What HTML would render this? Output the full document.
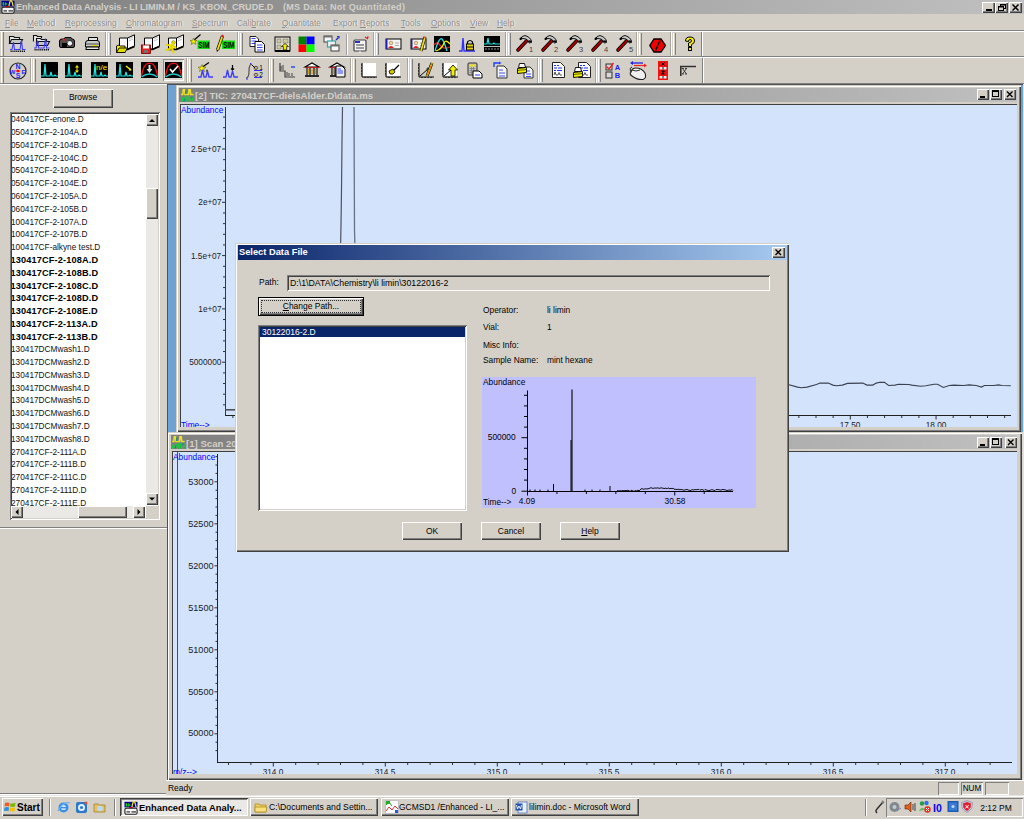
<!DOCTYPE html><html><head><meta charset="utf-8"><style>
html,body{margin:0;padding:0;}
body{width:1024px;height:819px;position:relative;overflow:hidden;background:#d4d0c8;font-family:'Liberation Sans', sans-serif;}
div{position:absolute;box-sizing:border-box;}
.t{white-space:nowrap;line-height:1;}
svg{position:absolute;overflow:visible;}
.dith{background:#ebe9e5;}

</style></head><body>
<div style="left:0px;top:0px;width:1024px;height:14px;background:linear-gradient(to right,#808080,#c0c0c0)"></div>
<svg style="left:1px;top:0px;" width="14" height="14" viewBox="0 0 14 14"><rect x="0.5" y="0.8" width="13" height="5.6" fill="#000090"/><path d="M2.3 5.5 L2.3 2.3" stroke="#10e020" stroke-width="1.3"/><path d="M4.3 5.5 L4.5 3.2 L6.3 4.5" stroke="#10c020" stroke-width="1.4" fill="none"/><path d="M8 6 Q9 -1 10.5 1 Q11.5 2 12 6" stroke="#f0e010" stroke-width="1.3" fill="none"/><path d="M4.6 6 L9 6 L6.8 9.3 Z" fill="#ff0000"/><rect x="0.9" y="7.2" width="12.2" height="6" rx="1.5" fill="#f4f4f4" stroke="#202020" stroke-width="1.1"/><rect x="2.5" y="10.3" width="3.5" height="1.2" fill="#303030"/><rect x="7.5" y="10.3" width="4.5" height="1.2" fill="#303030"/></svg>
<div class="t" style="left:16px;top:2.6px;font-size:9.1px;color:#d4d0c8;font-weight:bold;">Enhanced Data Analysis - LI LIMIN.M / KS_KBON_CRUDE.D</div>
<div class="t" style="left:283px;top:2.6px;font-size:9.1px;color:#d4d0c8;font-weight:bold;letter-spacing:0.25px">(MS Data: Not Quantitated)</div>
<div style="left:982px;top:2px;width:13px;height:11px;background:#d4d0c8;box-shadow:inset 1px 1px #fff, inset -1px -1px #404040, inset -2px -2px #808080;"></div>
<div style="left:995px;top:2px;width:13px;height:11px;background:#d4d0c8;box-shadow:inset 1px 1px #fff, inset -1px -1px #404040, inset -2px -2px #808080;"></div>
<div style="left:1009px;top:2px;width:13px;height:11px;background:#d4d0c8;box-shadow:inset 1px 1px #fff, inset -1px -1px #404040, inset -2px -2px #808080;"></div>
<div style="left:986px;top:9px;width:6px;height:2px;background:#000"></div>
<svg style="left:995px;top:2px;" width="13" height="11" viewBox="0 0 13 11"><rect x="5.5" y="2.5" width="5" height="4" fill="none" stroke="#000"/><rect x="5" y="2" width="6" height="1.5" fill="#000"/><rect x="3.5" y="4.5" width="5" height="4" fill="#d4d0c8" stroke="#000"/><rect x="3" y="4" width="6" height="1.5" fill="#000"/></svg>
<svg style="left:1009px;top:2px;" width="13" height="11" viewBox="0 0 13 11"><path d="M3.5 2.5 L9.5 8.5 M9.5 2.5 L3.5 8.5" stroke="#000" stroke-width="1.5"/></svg>
<div class="t" style="left:5.8px;top:19.42px;font-size:9.31px;color:#f4f4f4;font-weight:normal;transform:scaleX(0.91);transform-origin:left 0;"><u>F</u>ile</div>
<div class="t" style="left:5px;top:18.72px;font-size:9.31px;color:#8e8e8e;font-weight:normal;transform:scaleX(0.91);transform-origin:left 0;"><u>F</u>ile</div>
<div class="t" style="left:27.8px;top:19.42px;font-size:9.31px;color:#f4f4f4;font-weight:normal;transform:scaleX(0.91);transform-origin:left 0;"><u>M</u>ethod</div>
<div class="t" style="left:27px;top:18.72px;font-size:9.31px;color:#8e8e8e;font-weight:normal;transform:scaleX(0.91);transform-origin:left 0;"><u>M</u>ethod</div>
<div class="t" style="left:65.8px;top:19.42px;font-size:9.31px;color:#f4f4f4;font-weight:normal;transform:scaleX(0.91);transform-origin:left 0;"><u>R</u>eprocessing</div>
<div class="t" style="left:65px;top:18.72px;font-size:9.31px;color:#8e8e8e;font-weight:normal;transform:scaleX(0.91);transform-origin:left 0;"><u>R</u>eprocessing</div>
<div class="t" style="left:126.8px;top:19.42px;font-size:9.31px;color:#f4f4f4;font-weight:normal;transform:scaleX(0.91);transform-origin:left 0;"><u>C</u>hromatogram</div>
<div class="t" style="left:126px;top:18.72px;font-size:9.31px;color:#8e8e8e;font-weight:normal;transform:scaleX(0.91);transform-origin:left 0;"><u>C</u>hromatogram</div>
<div class="t" style="left:192.8px;top:19.42px;font-size:9.31px;color:#f4f4f4;font-weight:normal;transform:scaleX(0.91);transform-origin:left 0;"><u>S</u>pectrum</div>
<div class="t" style="left:192px;top:18.72px;font-size:9.31px;color:#8e8e8e;font-weight:normal;transform:scaleX(0.91);transform-origin:left 0;"><u>S</u>pectrum</div>
<div class="t" style="left:237.8px;top:19.42px;font-size:9.31px;color:#f4f4f4;font-weight:normal;transform:scaleX(0.91);transform-origin:left 0;">Cali<u>b</u>rate</div>
<div class="t" style="left:237px;top:18.72px;font-size:9.31px;color:#8e8e8e;font-weight:normal;transform:scaleX(0.91);transform-origin:left 0;">Cali<u>b</u>rate</div>
<div class="t" style="left:282.8px;top:19.42px;font-size:9.31px;color:#f4f4f4;font-weight:normal;transform:scaleX(0.91);transform-origin:left 0;"><u>Q</u>uantitate</div>
<div class="t" style="left:282px;top:18.72px;font-size:9.31px;color:#8e8e8e;font-weight:normal;transform:scaleX(0.91);transform-origin:left 0;"><u>Q</u>uantitate</div>
<div class="t" style="left:333.8px;top:19.42px;font-size:9.31px;color:#f4f4f4;font-weight:normal;transform:scaleX(0.91);transform-origin:left 0;">Export <u>R</u>eports</div>
<div class="t" style="left:333px;top:18.72px;font-size:9.31px;color:#8e8e8e;font-weight:normal;transform:scaleX(0.91);transform-origin:left 0;">Export <u>R</u>eports</div>
<div class="t" style="left:401.8px;top:19.42px;font-size:9.31px;color:#f4f4f4;font-weight:normal;transform:scaleX(0.91);transform-origin:left 0;"><u>T</u>ools</div>
<div class="t" style="left:401px;top:18.72px;font-size:9.31px;color:#8e8e8e;font-weight:normal;transform:scaleX(0.91);transform-origin:left 0;"><u>T</u>ools</div>
<div class="t" style="left:431.8px;top:19.42px;font-size:9.31px;color:#f4f4f4;font-weight:normal;transform:scaleX(0.91);transform-origin:left 0;"><u>O</u>ptions</div>
<div class="t" style="left:431px;top:18.72px;font-size:9.31px;color:#8e8e8e;font-weight:normal;transform:scaleX(0.91);transform-origin:left 0;"><u>O</u>ptions</div>
<div class="t" style="left:470.8px;top:19.42px;font-size:9.31px;color:#f4f4f4;font-weight:normal;transform:scaleX(0.91);transform-origin:left 0;"><u>V</u>iew</div>
<div class="t" style="left:470px;top:18.72px;font-size:9.31px;color:#8e8e8e;font-weight:normal;transform:scaleX(0.91);transform-origin:left 0;"><u>V</u>iew</div>
<div class="t" style="left:497.8px;top:19.42px;font-size:9.31px;color:#f4f4f4;font-weight:normal;transform:scaleX(0.91);transform-origin:left 0;"><u>H</u>elp</div>
<div class="t" style="left:497px;top:18.72px;font-size:9.31px;color:#8e8e8e;font-weight:normal;transform:scaleX(0.91);transform-origin:left 0;"><u>H</u>elp</div>
<div style="left:0px;top:30px;width:1024px;height:1px;background:#808080"></div>
<div style="left:0px;top:31px;width:1024px;height:1px;background:#fff"></div>
<div style="left:0px;top:56px;width:1024px;height:1px;background:#808080"></div>
<div style="left:0px;top:57px;width:1024px;height:1px;background:#fff"></div>
<div style="left:0px;top:83px;width:1024px;height:1px;background:#808080"></div>
<div style="left:0px;top:84px;width:1024px;height:1px;background:#fff"></div>
<div style="left:53px;top:89px;width:60px;height:19px;background:#d4d0c8;box-shadow:inset 1px 1px #fff, inset -1px -1px #404040, inset -2px -2px #808080;"></div>
<div class="t" style="left:-17px;width:200px;text-align:center;top:93.42px;font-size:9.31px;color:#000;font-weight:normal;transform:scaleX(0.91);transform-origin:center 0;">Browse</div>
<div style="left:10px;top:112px;width:150px;height:408px;background:#fff;box-shadow:inset 1px 1px #808080, inset -1px -1px #fff, inset 2px 2px #404040, inset -2px -2px #d4d0c8;"></div>
<div style="left:12px;top:114px;width:134px;height:392px;overflow:hidden;">
<div class="t" style="left:-1.5px;top:1.33px;font-size:9.3px;color:#111;transform:scaleX(0.89);transform-origin:0 0">040417CF-enone.D</div>
<div class="t" style="left:-1.5px;top:14.11px;font-size:9.3px;color:#111;transform:scaleX(0.89);transform-origin:0 0">050417CF-2-104A.D</div>
<div class="t" style="left:-1.5px;top:26.89px;font-size:9.3px;color:#111;transform:scaleX(0.89);transform-origin:0 0">050417CF-2-104B.D</div>
<div class="t" style="left:-1.5px;top:39.67px;font-size:9.3px;color:#111;transform:scaleX(0.89);transform-origin:0 0">050417CF-2-104C.D</div>
<div class="t" style="left:-1.5px;top:52.45px;font-size:9.3px;color:#111;transform:scaleX(0.89);transform-origin:0 0">050417CF-2-104D.D</div>
<div class="t" style="left:-1.5px;top:65.23px;font-size:9.3px;color:#111;transform:scaleX(0.89);transform-origin:0 0">050417CF-2-104E.D</div>
<div class="t" style="left:-1.5px;top:78.01px;font-size:9.3px;color:#111;transform:scaleX(0.89);transform-origin:0 0">060417CF-2-105A.D</div>
<div class="t" style="left:-1.5px;top:90.79px;font-size:9.3px;color:#111;transform:scaleX(0.89);transform-origin:0 0">060417CF-2-105B.D</div>
<div class="t" style="left:-1.5px;top:103.57px;font-size:9.3px;color:#111;transform:scaleX(0.89);transform-origin:0 0">100417CF-2-107A.D</div>
<div class="t" style="left:-1.5px;top:116.35px;font-size:9.3px;color:#111;transform:scaleX(0.89);transform-origin:0 0">100417CF-2-107B.D</div>
<div class="t" style="left:-1.5px;top:129.13px;font-size:9.3px;color:#111;transform:scaleX(0.89);transform-origin:0 0">100417CF-alkyne test.D</div>
<div class="t" style="left:-1.5px;top:141.99px;font-size:9.2px;font-weight:bold;letter-spacing:0.15px;color:#000">130417CF-2-108A.D</div>
<div class="t" style="left:-1.5px;top:154.77px;font-size:9.2px;font-weight:bold;letter-spacing:0.15px;color:#000">130417CF-2-108B.D</div>
<div class="t" style="left:-1.5px;top:167.55px;font-size:9.2px;font-weight:bold;letter-spacing:0.15px;color:#000">130417CF-2-108C.D</div>
<div class="t" style="left:-1.5px;top:180.33px;font-size:9.2px;font-weight:bold;letter-spacing:0.15px;color:#000">130417CF-2-108D.D</div>
<div class="t" style="left:-1.5px;top:193.11px;font-size:9.2px;font-weight:bold;letter-spacing:0.15px;color:#000">130417CF-2-108E.D</div>
<div class="t" style="left:-1.5px;top:205.89px;font-size:9.2px;font-weight:bold;letter-spacing:0.15px;color:#000">130417CF-2-113A.D</div>
<div class="t" style="left:-1.5px;top:218.67px;font-size:9.2px;font-weight:bold;letter-spacing:0.15px;color:#000">130417CF-2-113B.D</div>
<div class="t" style="left:-1.5px;top:231.37px;font-size:9.3px;color:#111;transform:scaleX(0.89);transform-origin:0 0">130417DCMwash1.D</div>
<div class="t" style="left:-1.5px;top:244.15px;font-size:9.3px;color:#111;transform:scaleX(0.89);transform-origin:0 0">130417DCMwash2.D</div>
<div class="t" style="left:-1.5px;top:256.93px;font-size:9.3px;color:#111;transform:scaleX(0.89);transform-origin:0 0">130417DCMwash3.D</div>
<div class="t" style="left:-1.5px;top:269.71px;font-size:9.3px;color:#111;transform:scaleX(0.89);transform-origin:0 0">130417DCMwash4.D</div>
<div class="t" style="left:-1.5px;top:282.49px;font-size:9.3px;color:#111;transform:scaleX(0.89);transform-origin:0 0">130417DCMwash5.D</div>
<div class="t" style="left:-1.5px;top:295.27px;font-size:9.3px;color:#111;transform:scaleX(0.89);transform-origin:0 0">130417DCMwash6.D</div>
<div class="t" style="left:-1.5px;top:308.05px;font-size:9.3px;color:#111;transform:scaleX(0.89);transform-origin:0 0">130417DCMwash7.D</div>
<div class="t" style="left:-1.5px;top:320.83px;font-size:9.3px;color:#111;transform:scaleX(0.89);transform-origin:0 0">130417DCMwash8.D</div>
<div class="t" style="left:-1.5px;top:333.61px;font-size:9.3px;color:#111;transform:scaleX(0.89);transform-origin:0 0">270417CF-2-111A.D</div>
<div class="t" style="left:-1.5px;top:346.39px;font-size:9.3px;color:#111;transform:scaleX(0.89);transform-origin:0 0">270417CF-2-111B.D</div>
<div class="t" style="left:-1.5px;top:359.17px;font-size:9.3px;color:#111;transform:scaleX(0.89);transform-origin:0 0">270417CF-2-111C.D</div>
<div class="t" style="left:-1.5px;top:371.95px;font-size:9.3px;color:#111;transform:scaleX(0.89);transform-origin:0 0">270417CF-2-111D.D</div>
<div class="t" style="left:-1.5px;top:384.73px;font-size:9.3px;color:#111;transform:scaleX(0.89);transform-origin:0 0">270417CF-2-111E.D</div>
</div>
<div style="left:146px;top:126px;width:12px;height:367px;"></div>
<div class="dith" style="left:146px;top:126px;width:12px;height:367px;"></div>
<div style="left:146px;top:114px;width:12px;height:12px;background:#d4d0c8;box-shadow:inset 1px 1px #fff, inset -1px -1px #404040, inset -2px -2px #808080;"></div>
<svg style="left:146px;top:114px;" width="12" height="12" viewBox="0 0 12 12"><path d="M3 8 L6 5 L9 8 Z" fill="#000"/></svg>
<div style="left:146px;top:188px;width:12px;height:31px;background:#d4d0c8;box-shadow:inset 1px 1px #fff, inset -1px -1px #404040, inset -2px -2px #808080;"></div>
<div style="left:146px;top:493px;width:12px;height:12px;background:#d4d0c8;box-shadow:inset 1px 1px #fff, inset -1px -1px #404040, inset -2px -2px #808080;"></div>
<svg style="left:146px;top:493px;" width="12" height="12" viewBox="0 0 12 12"><path d="M3 4.5 L6 7.5 L9 4.5 Z" fill="#000"/></svg>
<div class="dith" style="left:23px;top:506px;width:110px;height:12px;"></div>
<div style="left:11px;top:506px;width:12px;height:12px;background:#d4d0c8;box-shadow:inset 1px 1px #fff, inset -1px -1px #404040, inset -2px -2px #808080;"></div>
<svg style="left:11px;top:506px;" width="12" height="12" viewBox="0 0 12 12"><path d="M7.5 3 L4.5 6 L7.5 9 Z" fill="#000"/></svg>
<div style="left:78px;top:506px;width:49px;height:12px;background:#d4d0c8;box-shadow:inset 1px 1px #fff, inset -1px -1px #404040, inset -2px -2px #808080;"></div>
<div style="left:133px;top:506px;width:12px;height:12px;background:#d4d0c8;box-shadow:inset 1px 1px #fff, inset -1px -1px #404040, inset -2px -2px #808080;"></div>
<svg style="left:133px;top:506px;" width="12" height="12" viewBox="0 0 12 12"><path d="M4.5 3 L7.5 6 L4.5 9 Z" fill="#000"/></svg>
<div style="left:146px;top:506px;width:12px;height:12px;background:#d4d0c8"></div>
<div style="left:0px;top:527px;width:167px;height:1px;background:#808080"></div>
<div style="left:0px;top:528px;width:167px;height:1px;background:#fff"></div>
<div style="left:0px;top:793px;width:166px;height:1px;background:#808080"></div>
<div style="left:0px;top:794px;width:166px;height:1px;background:#fff"></div>
<div style="left:167px;top:84px;width:857px;height:696px;background:#6ea2d4;box-shadow:inset 1px 1px #505050"></div>
<div style="left:1023px;top:84px;width:1px;height:696px;background:#e4e2dc"></div>
<div style="left:176px;top:85px;width:845px;height:347px;background:#d4d0c8;box-shadow:inset 1px 1px #d4d0c8, inset 2px 2px #fff, inset -1px -1px #404040, inset -2px -2px #808080;"></div>
<div style="left:179px;top:88px;width:838px;height:14px;background:linear-gradient(to right,#808080,#c0c0c0)"></div>
<svg style="left:181px;top:89px;" width="13" height="13" viewBox="0 0 13 13"><path d="M0 5.5 L1.8 5.5 L2.3 0.8 L3.5 0.8 L4 5.5 L7.5 5.5 L8 0.8 L9.2 0.8 L9.7 5.5 L12.5 5.5" stroke="#e8e020" stroke-width="1.6" fill="none"/><path d="M4.8 1.5 L4.8 5" stroke="#108080" stroke-width="1.2"/><path d="M0.8 12.5 L1.2 8.5 L2.5 12 M3.5 12 L4.5 8 M6 12.5 L6 6.5 M8.3 12.5 L8.3 7.5 L9.2 11.5 M11.5 8 L12 12.5" stroke="#10d030" stroke-width="1.5" fill="none"/><path d="M3 12.5 L4 9.5 M10 9 L11.5 7.5" stroke="#108a90" stroke-width="1.2"/></svg>
<div class="t" style="left:195px;top:90.87px;font-size:9.6px;color:#d4d0c8;font-weight:bold;">[2] TIC: 270417CF-dielsAlder.D\data.ms</div>
<div style="left:977px;top:89px;width:12px;height:11px;background:#d4d0c8;box-shadow:inset 1px 1px #fff, inset -1px -1px #404040, inset -2px -2px #808080;"></div>
<div style="left:990px;top:89px;width:12px;height:11px;background:#d4d0c8;box-shadow:inset 1px 1px #fff, inset -1px -1px #404040, inset -2px -2px #808080;"></div>
<div style="left:1004px;top:89px;width:12px;height:11px;background:#d4d0c8;box-shadow:inset 1px 1px #fff, inset -1px -1px #404040, inset -2px -2px #808080;"></div>
<div style="left:980px;top:96px;width:5px;height:2px;background:#000"></div>
<svg style="left:990px;top:89px;" width="12" height="11" viewBox="0 0 12 11"><rect x="2.5" y="1.5" width="6" height="6" fill="none" stroke="#000"/><rect x="2" y="1" width="7" height="2" fill="#000"/></svg>
<svg style="left:1004px;top:89px;" width="12" height="11" viewBox="0 0 12 11"><path d="M3 2.5 L8.5 8 M8.5 2.5 L3 8" stroke="#000" stroke-width="1.4"/></svg>
<div style="left:180px;top:104px;width:837px;height:323px;background:#d3e3fb;box-shadow:inset 1px 1px #404040"></div>
<div style="left:167px;top:432px;width:855px;height:348px;background:#d4d0c8;box-shadow:inset 1px 1px #d4d0c8, inset 2px 2px #fff, inset -1px -1px #404040, inset -2px -2px #808080;"></div>
<div style="left:171px;top:435px;width:846px;height:14px;background:linear-gradient(to right,#808080,#c0c0c0)"></div>
<svg style="left:172px;top:436px;" width="13" height="13" viewBox="0 0 13 13"><path d="M0 5.5 L1.8 5.5 L2.3 0.8 L3.5 0.8 L4 5.5 L7.5 5.5 L8 0.8 L9.2 0.8 L9.7 5.5 L12.5 5.5" stroke="#e8e020" stroke-width="1.6" fill="none"/><path d="M4.8 1.5 L4.8 5" stroke="#108080" stroke-width="1.2"/><path d="M0.8 12.5 L1.2 8.5 L2.5 12 M3.5 12 L4.5 8 M6 12.5 L6 6.5 M8.3 12.5 L8.3 7.5 L9.2 11.5 M11.5 8 L12 12.5" stroke="#10d030" stroke-width="1.5" fill="none"/><path d="M3 12.5 L4 9.5 M10 9 L11.5 7.5" stroke="#108a90" stroke-width="1.2"/></svg>
<div class="t" style="left:186px;top:438.67px;font-size:9.6px;color:#d4d0c8;font-weight:bold;">[1] Scan 20.123 min: 270417CF-dielsAlder.D\data.ms</div>
<div style="left:977px;top:437px;width:12px;height:11px;background:#d4d0c8;box-shadow:inset 1px 1px #fff, inset -1px -1px #404040, inset -2px -2px #808080;"></div>
<div style="left:990px;top:437px;width:12px;height:11px;background:#d4d0c8;box-shadow:inset 1px 1px #fff, inset -1px -1px #404040, inset -2px -2px #808080;"></div>
<div style="left:1005px;top:437px;width:12px;height:11px;background:#d4d0c8;box-shadow:inset 1px 1px #fff, inset -1px -1px #404040, inset -2px -2px #808080;"></div>
<div style="left:980px;top:444px;width:5px;height:2px;background:#000"></div>
<svg style="left:990px;top:437px;" width="12" height="11" viewBox="0 0 12 11"><rect x="2.5" y="1.5" width="6" height="6" fill="none" stroke="#000"/><rect x="2" y="1" width="7" height="2" fill="#000"/></svg>
<svg style="left:1005px;top:437px;" width="12" height="11" viewBox="0 0 12 11"><path d="M3 2.5 L8.5 8 M8.5 2.5 L3 8" stroke="#000" stroke-width="1.4"/></svg>
<div style="left:172px;top:451px;width:845px;height:323px;background:#d3e3fb;box-shadow:inset 1px 1px #404040"></div>
<div style="left:167px;top:432px;width:1px;height:348px;background:#505050"></div>
<div style="left:1022px;top:432px;width:1px;height:348px;background:#dcdad4"></div>
<div style="left:181px;top:105px;width:836px;height:322px;overflow:hidden;">
<svg style="left:0px;top:0px;" width="836" height="322" viewBox="0 0 836 322"><line x1="44.5" y1="2" x2="44.5" y2="311" stroke="#383838"/><line x1="44" y1="310.5" x2="830" y2="310.5" stroke="#202020"/><line x1="42" y1="299.84" x2="44" y2="299.84" stroke="#303030"/><line x1="42" y1="289.18" x2="44" y2="289.18" stroke="#303030"/><line x1="42" y1="278.52" x2="44" y2="278.52" stroke="#303030"/><line x1="42" y1="267.86" x2="44" y2="267.86" stroke="#303030"/><line x1="41" y1="257.20" x2="44" y2="257.20" stroke="#303030"/><line x1="42" y1="246.54" x2="44" y2="246.54" stroke="#303030"/><line x1="42" y1="235.88" x2="44" y2="235.88" stroke="#303030"/><line x1="42" y1="225.22" x2="44" y2="225.22" stroke="#303030"/><line x1="42" y1="214.56" x2="44" y2="214.56" stroke="#303030"/><line x1="41" y1="203.90" x2="44" y2="203.90" stroke="#303030"/><line x1="42" y1="193.24" x2="44" y2="193.24" stroke="#303030"/><line x1="42" y1="182.58" x2="44" y2="182.58" stroke="#303030"/><line x1="42" y1="171.92" x2="44" y2="171.92" stroke="#303030"/><line x1="42" y1="161.26" x2="44" y2="161.26" stroke="#303030"/><line x1="41" y1="150.60" x2="44" y2="150.60" stroke="#303030"/><line x1="42" y1="139.94" x2="44" y2="139.94" stroke="#303030"/><line x1="42" y1="129.28" x2="44" y2="129.28" stroke="#303030"/><line x1="42" y1="118.62" x2="44" y2="118.62" stroke="#303030"/><line x1="42" y1="107.96" x2="44" y2="107.96" stroke="#303030"/><line x1="41" y1="97.30" x2="44" y2="97.30" stroke="#303030"/><line x1="42" y1="86.64" x2="44" y2="86.64" stroke="#303030"/><line x1="42" y1="75.98" x2="44" y2="75.98" stroke="#303030"/><line x1="42" y1="65.32" x2="44" y2="65.32" stroke="#303030"/><line x1="42" y1="54.66" x2="44" y2="54.66" stroke="#303030"/><line x1="41" y1="44.00" x2="44" y2="44.00" stroke="#303030"/><line x1="42" y1="33.34" x2="44" y2="33.34" stroke="#303030"/><line x1="42" y1="22.68" x2="44" y2="22.68" stroke="#303030"/><line x1="42" y1="12.02" x2="44" y2="12.02" stroke="#303030"/><line x1="823.65" y1="310.5" x2="823.65" y2="313.0" stroke="#303030"/><line x1="806.50" y1="310.5" x2="806.50" y2="313.0" stroke="#303030"/><line x1="789.35" y1="310.5" x2="789.35" y2="313.0" stroke="#303030"/><line x1="772.20" y1="310.5" x2="772.20" y2="313.0" stroke="#303030"/><line x1="755.05" y1="310.5" x2="755.05" y2="314.5" stroke="#303030"/><line x1="737.90" y1="310.5" x2="737.90" y2="313.0" stroke="#303030"/><line x1="720.75" y1="310.5" x2="720.75" y2="313.0" stroke="#303030"/><line x1="703.60" y1="310.5" x2="703.60" y2="313.0" stroke="#303030"/><line x1="686.45" y1="310.5" x2="686.45" y2="313.0" stroke="#303030"/><line x1="669.30" y1="310.5" x2="669.30" y2="314.5" stroke="#303030"/><line x1="652.15" y1="310.5" x2="652.15" y2="313.0" stroke="#303030"/><line x1="635.00" y1="310.5" x2="635.00" y2="313.0" stroke="#303030"/><line x1="617.85" y1="310.5" x2="617.85" y2="313.0" stroke="#303030"/><line x1="600.70" y1="310.5" x2="600.70" y2="313.0" stroke="#303030"/><line x1="583.55" y1="310.5" x2="583.55" y2="314.5" stroke="#303030"/><line x1="566.40" y1="310.5" x2="566.40" y2="313.0" stroke="#303030"/><line x1="549.25" y1="310.5" x2="549.25" y2="313.0" stroke="#303030"/><line x1="532.10" y1="310.5" x2="532.10" y2="313.0" stroke="#303030"/><line x1="514.95" y1="310.5" x2="514.95" y2="313.0" stroke="#303030"/><line x1="497.80" y1="310.5" x2="497.80" y2="314.5" stroke="#303030"/><line x1="480.65" y1="310.5" x2="480.65" y2="313.0" stroke="#303030"/><line x1="463.50" y1="310.5" x2="463.50" y2="313.0" stroke="#303030"/><line x1="446.35" y1="310.5" x2="446.35" y2="313.0" stroke="#303030"/><line x1="429.20" y1="310.5" x2="429.20" y2="313.0" stroke="#303030"/><line x1="412.05" y1="310.5" x2="412.05" y2="314.5" stroke="#303030"/><line x1="394.90" y1="310.5" x2="394.90" y2="313.0" stroke="#303030"/><line x1="377.75" y1="310.5" x2="377.75" y2="313.0" stroke="#303030"/><line x1="360.60" y1="310.5" x2="360.60" y2="313.0" stroke="#303030"/><line x1="343.45" y1="310.5" x2="343.45" y2="313.0" stroke="#303030"/><line x1="326.30" y1="310.5" x2="326.30" y2="314.5" stroke="#303030"/><line x1="309.15" y1="310.5" x2="309.15" y2="313.0" stroke="#303030"/><line x1="292.00" y1="310.5" x2="292.00" y2="313.0" stroke="#303030"/><line x1="274.85" y1="310.5" x2="274.85" y2="313.0" stroke="#303030"/><line x1="257.70" y1="310.5" x2="257.70" y2="313.0" stroke="#303030"/><line x1="240.55" y1="310.5" x2="240.55" y2="314.5" stroke="#303030"/><line x1="223.40" y1="310.5" x2="223.40" y2="313.0" stroke="#303030"/><line x1="206.25" y1="310.5" x2="206.25" y2="313.0" stroke="#303030"/><line x1="189.10" y1="310.5" x2="189.10" y2="313.0" stroke="#303030"/><line x1="171.95" y1="310.5" x2="171.95" y2="313.0" stroke="#303030"/><line x1="154.80" y1="310.5" x2="154.80" y2="314.5" stroke="#303030"/><line x1="137.65" y1="310.5" x2="137.65" y2="313.0" stroke="#303030"/><line x1="120.50" y1="310.5" x2="120.50" y2="313.0" stroke="#303030"/><line x1="103.35" y1="310.5" x2="103.35" y2="313.0" stroke="#303030"/><line x1="86.20" y1="310.5" x2="86.20" y2="313.0" stroke="#303030"/><line x1="69.05" y1="310.5" x2="69.05" y2="314.5" stroke="#303030"/><line x1="51.90" y1="310.5" x2="51.90" y2="313.0" stroke="#303030"/><path d="M44 304.8 L55 304.8" stroke="#4a5058" stroke-width="1.6" fill="none"/><path d="M159.5 145 L160 120 L160.5 85 L161 35 L161.5 2" stroke="#505060" stroke-width="1.2" fill="none"/><path d="M173 2 L173.5 125 L174 145" stroke="#6a7080" stroke-width="1.3" fill="none"/><polyline points="608,279.8 616.7,282.1 620.2,282.8 626,282.1 635.5,279.5 639,278.1 647.2,278.1 651.9,280.1 655.4,280.7 661.3,280.1 666.5,278.4 681.8,278.1 685.9,280.1 691.8,280.1 695.3,278.1 698.8,277.2 703.5,277.4 707.6,280.5 714,280.1 717.5,279.3 727.8,279.5 730.7,280.1 739.5,281.3 744.8,280.7 753,279.3 756.5,279.3 762.4,282.5 768.2,280.5 773,280.1 782.3,280.5 788.2,279.9 795.2,280.5 800.5,282.1 803.4,280.5 812.8,280.5 817.5,279.9 821,280.5 829.8,280.7" stroke="#3a4250" stroke-width="1.1" fill="none"/></svg>
</div>
<div class="t" style="right:802.5px;top:145.01px;font-size:9.09px;color:#1a1a1a;font-weight:normal;transform:scaleX(0.91);transform-origin:right 0;">2.5e+07</div>
<div class="t" style="right:802.5px;top:198.21px;font-size:9.09px;color:#1a1a1a;font-weight:normal;transform:scaleX(0.91);transform-origin:right 0;">2e+07</div>
<div class="t" style="right:802.5px;top:251.51px;font-size:9.09px;color:#1a1a1a;font-weight:normal;transform:scaleX(0.91);transform-origin:right 0;">1.5e+07</div>
<div class="t" style="right:802.5px;top:304.81px;font-size:9.09px;color:#1a1a1a;font-weight:normal;transform:scaleX(0.91);transform-origin:right 0;">1e+07</div>
<div class="t" style="right:802.5px;top:358.11px;font-size:9.09px;color:#1a1a1a;font-weight:normal;transform:scaleX(0.91);transform-origin:right 0;">5000000</div>
<div class="t" style="left:181px;top:105.51px;font-size:9.2px;color:#0000ff;font-weight:normal;transform:scaleX(0.91);transform-origin:left 0;">Abundance</div>
<div style="left:181px;top:105px;width:836px;height:322px;overflow:hidden;">
<div class="t" style="left:0px;top:315.51px;font-size:9.2px;color:#0000ff;font-weight:normal;transform:scaleX(0.91);transform-origin:left 0;">Time--&gt;</div>
<div class="t" style="left:569px;width:200px;text-align:center;top:315.81px;font-size:9.09px;color:#1a1a1a;font-weight:normal;transform:scaleX(0.91);transform-origin:center 0;">17.50</div>
<div class="t" style="left:655px;width:200px;text-align:center;top:315.81px;font-size:9.09px;color:#1a1a1a;font-weight:normal;transform:scaleX(0.91);transform-origin:center 0;">18.00</div>
</div>
<div style="left:173px;top:452px;width:844px;height:322px;overflow:hidden;">
<svg style="left:0px;top:0px;" width="844" height="322" viewBox="0 0 844 322"><line x1="4.5" y1="0" x2="4.5" y2="322" stroke="#505050"/><line x1="44.5" y1="2" x2="44.5" y2="311" stroke="#202020"/><line x1="44" y1="310.5" x2="839" y2="310.5" stroke="#202020"/><line x1="41.5" y1="281.80" x2="44.5" y2="281.80" stroke="#303030"/><line x1="42.5" y1="273.40" x2="44.5" y2="273.40" stroke="#303030"/><line x1="42.5" y1="265.00" x2="44.5" y2="265.00" stroke="#303030"/><line x1="42.5" y1="256.60" x2="44.5" y2="256.60" stroke="#303030"/><line x1="42.5" y1="248.20" x2="44.5" y2="248.20" stroke="#303030"/><line x1="41.5" y1="239.80" x2="44.5" y2="239.80" stroke="#303030"/><line x1="42.5" y1="231.40" x2="44.5" y2="231.40" stroke="#303030"/><line x1="42.5" y1="223.00" x2="44.5" y2="223.00" stroke="#303030"/><line x1="42.5" y1="214.60" x2="44.5" y2="214.60" stroke="#303030"/><line x1="42.5" y1="206.20" x2="44.5" y2="206.20" stroke="#303030"/><line x1="41.5" y1="197.80" x2="44.5" y2="197.80" stroke="#303030"/><line x1="42.5" y1="189.40" x2="44.5" y2="189.40" stroke="#303030"/><line x1="42.5" y1="181.00" x2="44.5" y2="181.00" stroke="#303030"/><line x1="42.5" y1="172.60" x2="44.5" y2="172.60" stroke="#303030"/><line x1="42.5" y1="164.20" x2="44.5" y2="164.20" stroke="#303030"/><line x1="41.5" y1="155.80" x2="44.5" y2="155.80" stroke="#303030"/><line x1="42.5" y1="147.40" x2="44.5" y2="147.40" stroke="#303030"/><line x1="42.5" y1="139.00" x2="44.5" y2="139.00" stroke="#303030"/><line x1="42.5" y1="130.60" x2="44.5" y2="130.60" stroke="#303030"/><line x1="42.5" y1="122.20" x2="44.5" y2="122.20" stroke="#303030"/><line x1="41.5" y1="113.80" x2="44.5" y2="113.80" stroke="#303030"/><line x1="42.5" y1="105.40" x2="44.5" y2="105.40" stroke="#303030"/><line x1="42.5" y1="97.00" x2="44.5" y2="97.00" stroke="#303030"/><line x1="42.5" y1="88.60" x2="44.5" y2="88.60" stroke="#303030"/><line x1="42.5" y1="80.20" x2="44.5" y2="80.20" stroke="#303030"/><line x1="41.5" y1="71.80" x2="44.5" y2="71.80" stroke="#303030"/><line x1="42.5" y1="63.40" x2="44.5" y2="63.40" stroke="#303030"/><line x1="42.5" y1="55.00" x2="44.5" y2="55.00" stroke="#303030"/><line x1="42.5" y1="46.60" x2="44.5" y2="46.60" stroke="#303030"/><line x1="42.5" y1="38.20" x2="44.5" y2="38.20" stroke="#303030"/><line x1="41.5" y1="29.80" x2="44.5" y2="29.80" stroke="#303030"/><line x1="42.5" y1="21.40" x2="44.5" y2="21.40" stroke="#303030"/><line x1="42.5" y1="13.00" x2="44.5" y2="13.00" stroke="#303030"/><line x1="42.5" y1="4.60" x2="44.5" y2="4.60" stroke="#303030"/><line x1="42.5" y1="290.20" x2="44.5" y2="290.20" stroke="#303030"/><line x1="42.5" y1="298.60" x2="44.5" y2="298.60" stroke="#303030"/><line x1="55.50" y1="310.5" x2="55.50" y2="313.0" stroke="#303030"/><line x1="77.90" y1="310.5" x2="77.90" y2="313.0" stroke="#303030"/><line x1="100.30" y1="310.5" x2="100.30" y2="314.5" stroke="#303030"/><line x1="122.70" y1="310.5" x2="122.70" y2="313.0" stroke="#303030"/><line x1="145.10" y1="310.5" x2="145.10" y2="313.0" stroke="#303030"/><line x1="167.50" y1="310.5" x2="167.50" y2="313.0" stroke="#303030"/><line x1="189.90" y1="310.5" x2="189.90" y2="313.0" stroke="#303030"/><line x1="212.30" y1="310.5" x2="212.30" y2="314.5" stroke="#303030"/><line x1="234.70" y1="310.5" x2="234.70" y2="313.0" stroke="#303030"/><line x1="257.10" y1="310.5" x2="257.10" y2="313.0" stroke="#303030"/><line x1="279.50" y1="310.5" x2="279.50" y2="313.0" stroke="#303030"/><line x1="301.90" y1="310.5" x2="301.90" y2="313.0" stroke="#303030"/><line x1="324.30" y1="310.5" x2="324.30" y2="314.5" stroke="#303030"/><line x1="346.70" y1="310.5" x2="346.70" y2="313.0" stroke="#303030"/><line x1="369.10" y1="310.5" x2="369.10" y2="313.0" stroke="#303030"/><line x1="391.50" y1="310.5" x2="391.50" y2="313.0" stroke="#303030"/><line x1="413.90" y1="310.5" x2="413.90" y2="313.0" stroke="#303030"/><line x1="436.30" y1="310.5" x2="436.30" y2="314.5" stroke="#303030"/><line x1="458.70" y1="310.5" x2="458.70" y2="313.0" stroke="#303030"/><line x1="481.10" y1="310.5" x2="481.10" y2="313.0" stroke="#303030"/><line x1="503.50" y1="310.5" x2="503.50" y2="313.0" stroke="#303030"/><line x1="525.90" y1="310.5" x2="525.90" y2="313.0" stroke="#303030"/><line x1="548.30" y1="310.5" x2="548.30" y2="314.5" stroke="#303030"/><line x1="570.70" y1="310.5" x2="570.70" y2="313.0" stroke="#303030"/><line x1="593.10" y1="310.5" x2="593.10" y2="313.0" stroke="#303030"/><line x1="615.50" y1="310.5" x2="615.50" y2="313.0" stroke="#303030"/><line x1="637.90" y1="310.5" x2="637.90" y2="313.0" stroke="#303030"/><line x1="660.30" y1="310.5" x2="660.30" y2="314.5" stroke="#303030"/><line x1="682.70" y1="310.5" x2="682.70" y2="313.0" stroke="#303030"/><line x1="705.10" y1="310.5" x2="705.10" y2="313.0" stroke="#303030"/><line x1="727.50" y1="310.5" x2="727.50" y2="313.0" stroke="#303030"/><line x1="749.90" y1="310.5" x2="749.90" y2="313.0" stroke="#303030"/><line x1="772.30" y1="310.5" x2="772.30" y2="314.5" stroke="#303030"/><line x1="794.70" y1="310.5" x2="794.70" y2="313.0" stroke="#303030"/><line x1="817.10" y1="310.5" x2="817.10" y2="313.0" stroke="#303030"/></svg>
<div class="t" style="left:0px;top:0.91px;font-size:9.2px;color:#0000ff;font-weight:normal;transform:scaleX(0.91);transform-origin:left 0;">Abundance</div>
<div class="t" style="left:40.5px;top:25.91px;font-size:9.09px;color:#1a1a1a;font-weight:normal;transform:scaleX(0.91);transform-origin:left 0;transform:translateX(-100%);">53000</div>
<div class="t" style="left:40.5px;top:67.84px;font-size:9.09px;color:#1a1a1a;font-weight:normal;transform:scaleX(0.91);transform-origin:left 0;transform:translateX(-100%);">52500</div>
<div class="t" style="left:40.5px;top:109.77px;font-size:9.09px;color:#1a1a1a;font-weight:normal;transform:scaleX(0.91);transform-origin:left 0;transform:translateX(-100%);">52000</div>
<div class="t" style="left:40.5px;top:151.7px;font-size:9.09px;color:#1a1a1a;font-weight:normal;transform:scaleX(0.91);transform-origin:left 0;transform:translateX(-100%);">51500</div>
<div class="t" style="left:40.5px;top:193.63px;font-size:9.09px;color:#1a1a1a;font-weight:normal;transform:scaleX(0.91);transform-origin:left 0;transform:translateX(-100%);">51000</div>
<div class="t" style="left:40.5px;top:235.56px;font-size:9.09px;color:#1a1a1a;font-weight:normal;transform:scaleX(0.91);transform-origin:left 0;transform:translateX(-100%);">50500</div>
<div class="t" style="left:40.5px;top:277.49px;font-size:9.09px;color:#1a1a1a;font-weight:normal;transform:scaleX(0.91);transform-origin:left 0;transform:translateX(-100%);">50000</div>
<div class="t" style="left:0.30000000000001137px;width:200px;text-align:center;top:316.31px;font-size:9.09px;color:#1a1a1a;font-weight:normal;transform:scaleX(0.91);transform-origin:center 0;">314.0</div>
<div class="t" style="left:112.30000000000001px;width:200px;text-align:center;top:316.31px;font-size:9.09px;color:#1a1a1a;font-weight:normal;transform:scaleX(0.91);transform-origin:center 0;">314.5</div>
<div class="t" style="left:224.3px;width:200px;text-align:center;top:316.31px;font-size:9.09px;color:#1a1a1a;font-weight:normal;transform:scaleX(0.91);transform-origin:center 0;">315.0</div>
<div class="t" style="left:336.29999999999995px;width:200px;text-align:center;top:316.31px;font-size:9.09px;color:#1a1a1a;font-weight:normal;transform:scaleX(0.91);transform-origin:center 0;">315.5</div>
<div class="t" style="left:448.29999999999995px;width:200px;text-align:center;top:316.31px;font-size:9.09px;color:#1a1a1a;font-weight:normal;transform:scaleX(0.91);transform-origin:center 0;">316.0</div>
<div class="t" style="left:560.3px;width:200px;text-align:center;top:316.31px;font-size:9.09px;color:#1a1a1a;font-weight:normal;transform:scaleX(0.91);transform-origin:center 0;">316.5</div>
<div class="t" style="left:672.3px;width:200px;text-align:center;top:316.31px;font-size:9.09px;color:#1a1a1a;font-weight:normal;transform:scaleX(0.91);transform-origin:center 0;">317.0</div>
<div class="t" style="left:0px;top:316.21px;font-size:9.2px;color:#0000ff;font-weight:normal;transform:scaleX(0.91);transform-origin:left 0;">m/z--&gt;</div>
</div>
<div style="left:166px;top:780px;width:858px;height:1px;background:#fff"></div>
<div class="t" style="left:167.5px;top:783.82px;font-size:9.31px;color:#000;font-weight:normal;transform:scaleX(0.91);transform-origin:left 0;">Ready</div>
<div style="left:938px;top:782px;width:21px;height:13px;background:#d4d0c8;box-shadow:inset 1px 1px #808080, inset -1px -1px #fff;"></div>
<div style="left:961px;top:782px;width:22px;height:13px;background:#d4d0c8;box-shadow:inset 1px 1px #808080, inset -1px -1px #fff;"></div>
<div style="left:985px;top:782px;width:24px;height:13px;background:#d4d0c8;box-shadow:inset 1px 1px #808080, inset -1px -1px #fff;"></div>
<div class="t" style="left:871.5px;width:200px;text-align:center;top:784.4px;font-size:8.98px;color:#000;font-weight:normal;transform:scaleX(0.91);transform-origin:center 0;">NUM</div>
<div style="left:0px;top:795px;width:1024px;height:24px;background:#d4d0c8;box-shadow:inset 0 1px #e8e6e2, inset 0 2px #fff"></div>
<div style="left:2px;top:798px;width:41px;height:18px;background:#d4d0c8;box-shadow:inset 1px 1px #fff, inset -1px -1px #404040, inset -2px -2px #808080;"></div>
<div class="t" style="left:17px;top:803.03px;font-size:10px;color:#000;font-weight:bold;">Start</div>
<svg style="left:4px;top:801px;" width="12" height="12" viewBox="0 0 12 12"><path d="M1 2 Q3 1 5.5 2 L5 5.5 Q3 4.7 0.5 5.5 Z" fill="#f05a28"/><path d="M6.5 2.2 Q9 3 11.5 1.8 L11 5.6 Q8.5 6.3 6 5.6 Z" fill="#7cb800"/><path d="M0.5 6.5 Q3 5.7 5 6.5 L4.6 10 Q2.5 9.3 0 10 Z" fill="#2a8ee0"/><path d="M6 6.6 Q8.5 7.2 11 6.4 L10.6 10.2 Q8 10.8 5.5 10 Z" fill="#f8c000"/></svg>
<div style="left:49px;top:799px;width:1px;height:17px;background:#808080"></div>
<div style="left:50px;top:799px;width:1px;height:17px;background:#fff"></div>
<div style="left:114px;top:799px;width:1px;height:17px;background:#808080"></div>
<div style="left:115px;top:799px;width:1px;height:17px;background:#fff"></div>
<div style="left:865px;top:799px;width:1px;height:17px;background:#808080"></div>
<div style="left:866px;top:799px;width:1px;height:17px;background:#fff"></div>
<svg style="left:57px;top:800px;" width="13" height="14" viewBox="0 0 13 14"><circle cx="6.5" cy="7.5" r="5" fill="#3a8ee6"/><circle cx="6.5" cy="7.5" r="2.6" fill="#d4e8fa"/><rect x="3" y="7" width="7" height="1.4" fill="#3a8ee6"/><path d="M1 11 Q6 1 13 3" stroke="#6ab0f0" stroke-width="1.2" fill="none"/></svg>
<svg style="left:75px;top:800px;" width="13" height="14" viewBox="0 0 13 14"><rect x="1" y="2" width="11" height="11" rx="2" fill="#2c78d0"/><circle cx="6.5" cy="7.5" r="3.5" fill="#e8f0ff"/><circle cx="6.5" cy="7.5" r="1.6" fill="#2c78d0"/><circle cx="11" cy="3" r="1.5" fill="#e05020"/></svg>
<svg style="left:93px;top:800px;" width="13" height="14" viewBox="0 0 13 14"><path d="M1 4 L5 4 L6 5 L12 5 L12 12 L1 12 Z" fill="#e8c060" stroke="#a08030" stroke-width="0.8"/><circle cx="7" cy="8.5" r="2.8" fill="#b8dcf8"/></svg>
<div class="dith" style="left:120px;top:798px;width:128px;height:18px;box-shadow:inset 1px 1px #404040, inset -1px -1px #fff, inset 2px 2px #808080;"></div>
<div style="left:250px;top:798px;width:128px;height:18px;background:#d4d0c8;box-shadow:inset 1px 1px #fff, inset -1px -1px #404040, inset -2px -2px #808080;"></div>
<div style="left:381px;top:798px;width:128px;height:18px;background:#d4d0c8;box-shadow:inset 1px 1px #fff, inset -1px -1px #404040, inset -2px -2px #808080;"></div>
<div style="left:511px;top:798px;width:128px;height:18px;background:#d4d0c8;box-shadow:inset 1px 1px #fff, inset -1px -1px #404040, inset -2px -2px #808080;"></div>
<div class="t" style="left:139px;top:802.54px;font-size:9.4px;color:#000;font-weight:bold;">Enhanced Data Analy...</div>
<div class="t" style="left:269px;top:802.44px;font-size:9.52px;color:#000;font-weight:normal;transform:scaleX(0.91);transform-origin:left 0;">C:\Documents and Settin...</div>
<div class="t" style="left:399px;top:802.62px;font-size:9.31px;color:#000;font-weight:normal;transform:scaleX(0.91);transform-origin:left 0;">GCMSD1 /Enhanced - LI_...</div>
<div class="t" style="left:529px;top:802.62px;font-size:9.31px;color:#000;font-weight:normal;transform:scaleX(0.91);transform-origin:left 0;">lilimin.doc - Microsoft Word</div>
<svg style="left:124px;top:801px;" width="14" height="14" viewBox="0 0 14 14"><rect x="0.5" y="0.8" width="13" height="5.6" fill="#000090"/><path d="M2.3 5.5 L2.3 2.3" stroke="#10e020" stroke-width="1.3"/><path d="M4.3 5.5 L4.5 3.2 L6.3 4.5" stroke="#10c020" stroke-width="1.4" fill="none"/><path d="M8 6 Q9 -1 10.5 1 Q11.5 2 12 6" stroke="#f0e010" stroke-width="1.3" fill="none"/><path d="M4.6 6 L9 6 L6.8 9.3 Z" fill="#ff0000"/><rect x="0.9" y="7.2" width="12.2" height="6" rx="1.5" fill="#f4f4f4" stroke="#202020" stroke-width="1.1"/><rect x="2.5" y="10.3" width="3.5" height="1.2" fill="#303030"/><rect x="7.5" y="10.3" width="4.5" height="1.2" fill="#303030"/></svg>
<svg style="left:254px;top:801px;" width="14" height="12" viewBox="0 0 14 12"><path d="M1 3 L5 3 L6 4 L12 4 L12 11 L1 11 Z" fill="#f0d060" stroke="#b08a20" stroke-width="0.8"/><path d="M1 6 L13 6 L12 11 L1 11 Z" fill="#f8e080" stroke="#b08a20" stroke-width="0.8"/></svg>
<svg style="left:385px;top:800px;" width="14" height="14" viewBox="0 0 14 14"><rect x="0.5" y="0.5" width="13" height="13" fill="#fff" stroke="#c0c0c0"/><path d="M1 11 L4 7 L7 10 L10 6 L13 9" stroke="#e03030" fill="none"/><path d="M1 5 L4 2 L7 6" stroke="#20a020" fill="none"/><rect x="1" y="1" width="4" height="3" fill="#20b020"/><rect x="10" y="10" width="3" height="3" fill="#3050e0"/></svg>
<svg style="left:515px;top:800px;" width="13" height="14" viewBox="0 0 13 14"><rect x="3" y="2" width="9" height="11" fill="#e8f0ff" stroke="#5070b0" stroke-width="0.8"/><rect x="0.5" y="3.5" width="7" height="7" fill="#2050b0"/><path d="M1.5 5 L2.5 9 L4 6 L5.5 9 L6.5 5" stroke="#fff" fill="none" stroke-width="0.9"/></svg>
<div style="left:886px;top:798px;width:137px;height:19px;background:#d4d0c8;box-shadow:inset 1px 1px #808080, inset -1px -1px #fff;"></div>
<svg style="left:875px;top:800px;" width="10" height="14" viewBox="0 0 10 14"><path d="M2 13 Q0 11 2 9 L8 2" stroke="#303030" stroke-width="1.5" fill="none"/><path d="M7 1 L9 3" stroke="#808080" stroke-width="2"/></svg>
<svg style="left:889px;top:801px;" width="13" height="12" viewBox="0 0 13 12"><circle cx="5.5" cy="6" r="5" fill="#808890"/><circle cx="5.5" cy="6" r="2" fill="#c0c8d0"/><path d="M8 10 L12 7" stroke="#8080c0"/></svg>
<svg style="left:904px;top:801px;" width="12" height="12" viewBox="0 0 12 12"><path d="M1 4 L4 4 L7 1 L7 11 L4 8 L1 8 Z" fill="#e06020" stroke="#602000" stroke-width="0.6"/><path d="M9 3 L9 9 M11 2 L11 10" stroke="#404040"/></svg>
<svg style="left:918px;top:800px;" width="13" height="13" viewBox="0 0 13 13"><circle cx="4" cy="3.5" r="2.2" fill="#20a040"/><circle cx="8.5" cy="3" r="2.2" fill="#3070e0"/><path d="M1 11 Q4 5 7 10" fill="#60c060"/><circle cx="9.5" cy="9.5" r="3.2" fill="#e03020"/><path d="M8 8 L11 11 M11 8 L8 11" stroke="#fff" stroke-width="0.9"/></svg>
<div class="t" style="left:933px;top:802.61px;font-size:10.5px;color:#0000ff;font-weight:bold;">I0</div>
<svg style="left:947px;top:800px;" width="12" height="13" viewBox="0 0 12 13"><rect x="0.5" y="1" width="11" height="11" fill="#1c5cb8"/><rect x="2" y="2.5" width="8" height="8" fill="#3c7cd0"/><circle cx="6" cy="6.5" r="1.5" fill="#c0d8f8"/></svg>
<svg style="left:961px;top:800px;" width="12" height="13" viewBox="0 0 12 13"><path d="M6 0.5 L11.5 2.5 L11 8 Q9 11 6 12.5 Q3 11 1 8 L0.5 2.5 Z" fill="#c8c8d8" stroke="#8088a0" stroke-width="0.6"/><path d="M6 2 L10 3.5 L9.6 7.6 Q8 10 6 11 Q4 10 2.4 7.6 L2 3.5 Z" fill="#e02030"/><path d="M4.3 5 L7.7 8.4 M7.7 5 L4.3 8.4" stroke="#fff" stroke-width="1"/></svg>
<div class="t" style="left:896px;width:200px;text-align:center;top:803.92px;font-size:9.31px;color:#000;font-weight:normal;transform:scaleX(0.91);transform-origin:center 0;">2:12 PM</div>
<div style="left:235px;top:243px;width:554px;height:309px;background:#d4d0c8;box-shadow:inset 1px 1px #d4d0c8, inset 2px 2px #fff, inset -1px -1px #404040, inset -2px -2px #808080;"></div>
<div style="left:238px;top:245px;width:549px;height:15px;background:linear-gradient(to right,#0a246a,#a6caf0)"></div>
<div class="t" style="left:239px;top:247.83px;font-size:9.3px;color:#fff;font-weight:bold;">Select Data File</div>
<div style="left:772px;top:247px;width:13px;height:11px;background:#d4d0c8;box-shadow:inset 1px 1px #fff, inset -1px -1px #404040, inset -2px -2px #808080;"></div>
<svg style="left:772px;top:247px;" width="13" height="11" viewBox="0 0 13 11"><path d="M3.5 2.5 L9 8 M9 2.5 L3.5 8" stroke="#000" stroke-width="1.4"/></svg>
<div class="t" style="left:258.5px;top:278.32px;font-size:9.31px;color:#000;font-weight:normal;transform:scaleX(0.91);transform-origin:left 0;">Path:</div>
<div style="left:287px;top:275px;width:483px;height:16px;background:#d4d0c8;box-shadow:inset 1px 1px #808080, inset -1px -1px #fff, inset 2px 2px #404040, inset -2px -2px #d4d0c8;"></div>
<div class="t" style="left:290px;top:278.05px;font-size:9.63px;color:#000;font-weight:normal;transform:scaleX(0.91);transform-origin:left 0;">D:\1\DATA\Chemistry\li limin\30122016-2</div>
<div style="left:258px;top:297px;width:106px;height:19px;background:#d4d0c8;box-shadow:inset 1px 1px #000, inset -1px -1px #000, inset 2px 2px #fff, inset -2px -2px #404040, inset -3px -3px #808080;"></div>
<div style="left:261px;top:300px;width:100px;height:13px;border:1px dotted #303030;"></div>
<div class="t" style="left:211px;width:200px;text-align:center;top:301.82px;font-size:9.31px;color:#000;font-weight:normal;transform:scaleX(0.91);transform-origin:center 0;"><u>C</u>hange Path...</div>
<div style="left:258px;top:325px;width:209px;height:186px;background:#fff;box-shadow:inset 1px 1px #808080, inset -1px -1px #fff, inset 2px 2px #404040, inset -2px -2px #d4d0c8;"></div>
<div style="left:260px;top:327px;width:205px;height:10px;background:#0a246a"></div>
<div class="t" style="left:262px;top:327.72px;font-size:9.31px;color:#fff;font-weight:normal;transform:scaleX(0.91);transform-origin:left 0;">30122016-2.D</div>
<div class="t" style="left:482.8px;top:306.41px;font-size:9.2px;color:#000;font-weight:normal;transform:scaleX(0.91);transform-origin:left 0;">Operator:</div>
<div class="t" style="left:482.8px;top:323.21px;font-size:9.2px;color:#000;font-weight:normal;transform:scaleX(0.91);transform-origin:left 0;">Vial:</div>
<div class="t" style="left:482.8px;top:341.01px;font-size:9.2px;color:#000;font-weight:normal;transform:scaleX(0.91);transform-origin:left 0;">Misc Info:</div>
<div class="t" style="left:482.8px;top:356.41px;font-size:9.2px;color:#000;font-weight:normal;transform:scaleX(0.91);transform-origin:left 0;">Sample Name:</div>
<div class="t" style="left:546.6px;top:306.41px;font-size:9.2px;color:#000;font-weight:normal;transform:scaleX(0.91);transform-origin:left 0;">li limin</div>
<div class="t" style="left:546.6px;top:323.21px;font-size:9.2px;color:#000;font-weight:normal;transform:scaleX(0.91);transform-origin:left 0;">1</div>
<div class="t" style="left:546.6px;top:356.41px;font-size:9.2px;color:#000;font-weight:normal;transform:scaleX(0.91);transform-origin:left 0;">mint hexane</div>
<div style="left:482px;top:377px;width:274px;height:131px;background:#c0c0ff"></div>
<div class="t" style="left:483px;top:378.01px;font-size:9.2px;color:#000;font-weight:normal;transform:scaleX(0.91);transform-origin:left 0;">Abundance</div>
<svg style="left:0px;top:0px;left:482px;top:377px;" width="274" height="131" viewBox="0 0 274 131"><line x1="45.5" y1="13.5" x2="45.5" y2="114.5" stroke="#000"/><line x1="45" y1="114.5" x2="251" y2="114.5" stroke="#000"/><line x1="42.0" y1="18.30000000000001" x2="45.5" y2="18.30000000000001" stroke="#000"/><line x1="42.0" y1="28.899999999999977" x2="45.5" y2="28.899999999999977" stroke="#000"/><line x1="42.0" y1="39.5" x2="45.5" y2="39.5" stroke="#000"/><line x1="42.0" y1="50.10000000000002" x2="45.5" y2="50.10000000000002" stroke="#000"/><line x1="39.5" y1="60.69999999999999" x2="45.5" y2="60.69999999999999" stroke="#000"/><line x1="42.0" y1="71.30000000000001" x2="45.5" y2="71.30000000000001" stroke="#000"/><line x1="42.0" y1="81.89999999999998" x2="45.5" y2="81.89999999999998" stroke="#000"/><line x1="42.0" y1="92.5" x2="45.5" y2="92.5" stroke="#000"/><line x1="42.0" y1="103.10000000000002" x2="45.5" y2="103.10000000000002" stroke="#000"/><line x1="39.5" y1="114.19999999999999" x2="45.5" y2="114.19999999999999" stroke="#000"/><line x1="45.50" y1="114.5" x2="45.50" y2="118.5" stroke="#000"/><line x1="74.95" y1="114.5" x2="74.95" y2="117.0" stroke="#000"/><line x1="104.40" y1="114.5" x2="104.40" y2="117.0" stroke="#000"/><line x1="133.85" y1="114.5" x2="133.85" y2="117.0" stroke="#000"/><line x1="163.30" y1="114.5" x2="163.30" y2="117.0" stroke="#000"/><line x1="192.75" y1="114.5" x2="192.75" y2="118.5" stroke="#000"/><line x1="222.20" y1="114.5" x2="222.20" y2="117.0" stroke="#000"/><line x1="90" y1="12.5" x2="90" y2="114.5" stroke="#000" stroke-width="1.1"/><line x1="89" y1="63" x2="89" y2="114.5" stroke="#000"/><line x1="71.5" y1="107" x2="71.5" y2="114.5" stroke="#000"/><line x1="128" y1="109" x2="128" y2="114.5" stroke="#000"/><polyline points="135,113.75 136,113.50 137,114.20 138,113.39 139,114.03 140,113.79 141,113.35 142,113.97 143,113.31 144,113.85 145,113.33 146,113.34 147,113.79 148,114.33 149,113.32 150,113.43 151,113.97 152,114.38 153,113.82 154,113.52 155,114.28 156,112.92 157,113.99 158,113.12 159,111.85 160,111.73 161,111.91 162,112.53 163,111.55 164,112.02 165,112.01 166,111.54 167,111.69 168,110.92 169,110.83 170,110.95 171,111.53 172,111.11 173,110.89 174,111.22 175,110.99 176,110.74 177,111.42 178,111.28 179,110.65 180,111.13 181,111.09 182,111.62 183,111.47 184,110.91 185,111.95 186,110.82 187,111.33 188,111.89 189,111.14 190,111.70 191,111.17 192,112.14 193,112.37 194,112.19 195,112.71 196,112.00 197,112.62 198,112.55 199,112.60 200,112.49 201,113.09 202,113.28 203,112.67 204,112.98 205,112.17 206,113.10 207,113.06 208,113.57 209,113.35 210,112.61 211,112.77 212,113.18 213,112.29 214,112.91 215,112.51 216,112.44 217,112.36 218,113.36 219,112.47 220,112.64 221,112.84 222,113.51 223,112.41 224,112.93 225,113.07 226,113.54 227,113.45 228,113.51 229,112.69 230,112.88 231,112.80 232,113.54 233,113.64 234,112.51 235,112.55 236,112.62 237,112.63 238,112.98 239,113.12 240,112.67 241,112.31 242,112.89 243,112.82 244,113.09 245,113.63 246,113.27 247,113.02 248,113.16 249,113.25 250,112.38 251,113.56" stroke="#000" fill="none" stroke-width="0.9"/><line x1="48" y1="112.5" x2="48" y2="114.5" stroke="#000"/><line x1="53" y1="112.5" x2="53" y2="114.5" stroke="#000"/><line x1="58" y1="112.5" x2="58" y2="114.5" stroke="#000"/><line x1="66" y1="112.5" x2="66" y2="114.5" stroke="#000"/><line x1="103" y1="112.5" x2="103" y2="114.5" stroke="#000"/><line x1="110" y1="112.5" x2="110" y2="114.5" stroke="#000"/><line x1="118" y1="112.5" x2="118" y2="114.5" stroke="#000"/></svg>
<div class="t" style="right:508.5px;top:432.71px;font-size:9.2px;color:#000;font-weight:normal;transform:scaleX(0.91);transform-origin:right 0;">500000</div>
<div class="t" style="right:507.5px;top:487.01px;font-size:9.2px;color:#000;font-weight:normal;transform:scaleX(0.91);transform-origin:right 0;">0</div>
<div class="t" style="left:483px;top:497.51px;font-size:9.09px;color:#000;font-weight:normal;transform:scaleX(0.91);transform-origin:left 0;">Time--&gt;</div>
<div class="t" style="left:427px;width:200px;text-align:center;top:497.41px;font-size:9.2px;color:#000;font-weight:normal;transform:scaleX(0.91);transform-origin:center 0;">4.09</div>
<div class="t" style="left:574.5px;width:200px;text-align:center;top:497.41px;font-size:9.2px;color:#000;font-weight:normal;transform:scaleX(0.91);transform-origin:center 0;">30.58</div>
<div style="left:402px;top:522px;width:60px;height:18px;background:#d4d0c8;box-shadow:inset 1px 1px #fff, inset -1px -1px #404040, inset -2px -2px #808080;"></div>
<div class="t" style="left:332px;width:200px;text-align:center;top:527.12px;font-size:9.31px;color:#000;font-weight:normal;transform:scaleX(0.91);transform-origin:center 0;">OK</div>
<div style="left:481px;top:522px;width:60px;height:18px;background:#d4d0c8;box-shadow:inset 1px 1px #fff, inset -1px -1px #404040, inset -2px -2px #808080;"></div>
<div class="t" style="left:411px;width:200px;text-align:center;top:527.12px;font-size:9.31px;color:#000;font-weight:normal;transform:scaleX(0.91);transform-origin:center 0;">Cancel</div>
<div style="left:560px;top:522px;width:60px;height:18px;background:#d4d0c8;box-shadow:inset 1px 1px #fff, inset -1px -1px #404040, inset -2px -2px #808080;"></div>
<div class="t" style="left:490px;width:200px;text-align:center;top:527.12px;font-size:9.31px;color:#000;font-weight:normal;transform:scaleX(0.91);transform-origin:center 0;"><u>H</u>elp</div>
<div style="left:1px;top:32px;width:1px;height:24px;background:#fff"></div>
<div style="left:3px;top:32px;width:1px;height:24px;background:#808080"></div>
<div style="left:1px;top:58px;width:1px;height:25px;background:#fff"></div>
<div style="left:3px;top:58px;width:1px;height:25px;background:#808080"></div>
<svg style="left:9px;top:35px" width="18" height="18" viewBox="0 0 18 18"><path d="M0.5 8.5 L0.5 1.5 L4.5 1.5 L5.5 2.5 L10.5 2.5 L10.5 4.5" stroke="#101010" fill="#e8e8e8" stroke-width="1.1"/><path d="M0.5 8.5 L2.5 4.5 L13.5 4.5 L11.5 8.5 Z" fill="#c4c4c4" stroke="#101010" stroke-width="1.1"/><path d="M1 14.5 L3 14.5 L4.5 7 L5.5 14.5 L11 14.5 L12.5 5 L13.5 14.5 L16.5 14.5" stroke="#3c3cff" stroke-width="1.1" fill="none"/><path d="M1.5 16.2 L16.5 16.2" stroke="#101010" stroke-width="1.5" stroke-dasharray="1.2 0.7"/></svg>
<svg style="left:33px;top:35px" width="18" height="18" viewBox="0 0 18 18"><path d="M0.5 6.5 L0.5 0.5 L3.5 0.5 L4.5 1.5 L8.5 1.5 L8.5 3" stroke="#101010" fill="#e8e8e8" stroke-width="1.1"/><g transform="translate(3,2)"><path d="M0.5 8.5 L0.5 1.5 L4.5 1.5 L5.5 2.5 L10.5 2.5 L10.5 4.5" stroke="#101010" fill="#e8e8e8" stroke-width="1.1"/><path d="M0.5 8.5 L2.5 4.5 L13.5 4.5 L11.5 8.5 Z" fill="#c4c4c4" stroke="#101010" stroke-width="1.1"/></g><g transform="translate(0,-1.5)"><path d="M1 14.5 L3 14.5 L4.5 7 L5.5 14.5 L11 14.5 L12.5 5 L13.5 14.5 L16.5 14.5" stroke="#3c3cff" stroke-width="1.1" fill="none"/><path d="M1.5 16.2 L16.5 16.2" stroke="#101010" stroke-width="1.5" stroke-dasharray="1.2 0.7"/></g></svg>
<svg style="left:59px;top:37px" width="18" height="12" viewBox="0 0 18 12"><path d="M0.5 4 Q0.5 2 3 2 L5 2 L6 0.5 L12 0.5 L13 2 Q15.5 2 15.5 4 L15.5 9 Q15.5 10.5 14 10.5 L2 10.5 Q0.5 10.5 0.5 9 Z" fill="#505050" stroke="#000"/><rect x="3" y="6" width="5" height="4" fill="#000"/><circle cx="10.8" cy="6.3" r="2.8" fill="#f4f4f4" stroke="#000" stroke-width="0.8"/><rect x="3.5" y="2" width="2.5" height="1.6" fill="#e82020"/><rect x="8" y="4" width="1.2" height="1.2" fill="#20a0a0"/></svg>
<svg style="left:85px;top:37px" width="18" height="13" viewBox="0 0 18 13"><path d="M3.5 0.5 L12.5 0.5 L12.5 3.5 L3.5 3.5 Z" fill="#e4e4e4" stroke="#000"/><path d="M0.5 6 Q0.5 3.5 3 3.5 L12 3.5 Q14.5 3.5 14.5 6 L14.5 10 L0.5 10 Z" fill="#c8c8c8" stroke="#000"/><path d="M1 7 L14 7" stroke="#505050"/><rect x="7" y="8" width="5" height="1.3" fill="#e0d000"/><path d="M1.5 10 L13.5 10 L14.2 12.5 L0.8 12.5 Z" fill="#e8e8e8" stroke="#000"/></svg>
<div style="left:105px;top:32px;width:1px;height:24px;background:#a8a49c"></div>
<div style="left:106px;top:32px;width:1px;height:24px;background:#fff"></div>
<div style="left:108px;top:33px;width:1px;height:22px;background:#fff"></div>
<div style="left:110px;top:33px;width:1px;height:22px;background:#808080"></div>
<svg style="left:116px;top:34px" width="20" height="20" viewBox="0 0 20 20"><path d="M3.5 4 L11.5 4 L11.5 15 L3.5 15 Z" fill="#f8f8f8" stroke="#000"/><path d="M11.5 4 L18.5 0.8 L18.5 12 L11.5 15 Z" fill="#fff" stroke="#000"/><path d="M13 5 L17 3 M13 7 L17 5" stroke="#c0c0c0"/><path d="M3.5 15.5 L11.5 15.5 L18.5 12.5" stroke="#000" fill="none" stroke-width="1.6"/><path d="M0.5 12 L3 11 L4 12 L9 12 L9 18.5 L0.5 18.5 Z" fill="#f0f000" stroke="#000" stroke-width="0.9"/><path d="M0.5 18.5 L3 14 L11.5 14 L9 18.5 Z" fill="#e0e000" stroke="#000" stroke-width="0.9"/></svg>
<svg style="left:141px;top:34px" width="20" height="20" viewBox="0 0 20 20"><path d="M3.5 4 L11.5 4 L11.5 15 L3.5 15 Z" fill="#f8f8f8" stroke="#000"/><path d="M11.5 4 L18.5 0.8 L18.5 12 L11.5 15 Z" fill="#fff" stroke="#000"/><path d="M13 5 L17 3 M13 7 L17 5" stroke="#c0c0c0"/><path d="M3.5 15.5 L11.5 15.5 L18.5 12.5" stroke="#000" fill="none" stroke-width="1.6"/><rect x="0.5" y="11" width="9" height="8.5" fill="#e82020" stroke="#700000" stroke-width="0.8"/><rect x="2" y="11.5" width="6" height="3" fill="#fff"/><rect x="3" y="16" width="4" height="3" fill="#707070"/></svg>
<svg style="left:165px;top:34px" width="20" height="20" viewBox="0 0 20 20"><path d="M3.5 4 L11.5 4 L11.5 15 L3.5 15 Z" fill="#f8f8f8" stroke="#000"/><path d="M11.5 4 L18.5 0.8 L18.5 12 L11.5 15 Z" fill="#fff" stroke="#000"/><path d="M13 5 L17 3 M13 7 L17 5" stroke="#c0c0c0"/><path d="M3.5 15.5 L11.5 15.5 L18.5 12.5" stroke="#000" fill="none" stroke-width="1.6"/><circle cx="8.5" cy="8.5" r="1.8" fill="#f0e000" stroke="#606000" stroke-width="0.5"/><path d="M7.5 10 L4.5 15 L1 16 M4.5 15 L7 14 L8.5 18.5 M6.5 11.5 L2 11 M7 11 L10.5 13.5" stroke="#e8d800" stroke-width="2.2" fill="none" stroke-linecap="round"/></svg>
<svg style="left:190px;top:34px" width="21" height="20" viewBox="0 0 21 20"><path d="M3 7 L10.5 0.5" stroke="#000" stroke-width="1.2"/><path d="M3.5 4 L4.5 6.3 L7 6.5 L5 8 L5.8 10.5 L3.5 9 L1.2 10.5 L2 8 L0 6.5 L2.5 6.3 Z" fill="#f0f000" stroke="#505000" stroke-width="0.5"/><rect x="7.5" y="6.5" width="12.5" height="8.5" fill="#10e010"/><text x="8.3" y="14.2" textLength="11" lengthAdjust="spacingAndGlyphs" font-family="Liberation Sans" font-weight="bold" font-size="9.5" fill="#000">SIM</text></svg>
<svg style="left:216px;top:34px" width="21" height="20" viewBox="0 0 21 20"><rect x="6" y="6.5" width="13" height="8.5" fill="#10e010"/><text x="7" y="14.2" textLength="11.5" lengthAdjust="spacingAndGlyphs" font-family="Liberation Sans" font-weight="bold" font-size="9.5" fill="#000">SIM</text><path d="M6.5 2 L1.5 16" stroke="#000" stroke-width="3.2"/><path d="M6.5 2 L1.5 16" stroke="#f0e000" stroke-width="1.9"/><path d="M6 0.5 L7.8 1.2 L7 3.5 L5.2 2.8 Z" fill="#e02020"/><path d="M1.5 16 L1 17.5" stroke="#000" stroke-width="1.2"/></svg>
<div style="left:237px;top:32px;width:1px;height:24px;background:#a8a49c"></div>
<div style="left:238px;top:32px;width:1px;height:24px;background:#fff"></div>
<div style="left:240px;top:33px;width:1px;height:22px;background:#fff"></div>
<div style="left:242px;top:33px;width:1px;height:22px;background:#808080"></div>
<svg style="left:249px;top:36px" width="18" height="18" viewBox="0 0 18 18"><path d="M1 0.5 L7 0.5 L9.5 3 L9.5 10.5 L1 10.5 Z" fill="#fff" stroke="#202020"/><path d="M2.5 2.5 L6.5 2.5 M2.5 5 L7.5 5 M2.5 7.5 L7.5 7.5" stroke="#2030ff" stroke-width="0.9"/><path d="M6 5.5 L12.5 5.5 L15.5 8.5 L15.5 16 L6 16 Z" fill="#fff" stroke="#000"/><path d="M8 9 L13.5 9 M8 11.5 L13.5 11.5 M8 14 L13.5 14" stroke="#2030ff" stroke-width="0.9"/></svg>
<svg style="left:274px;top:36px" width="18" height="18" viewBox="0 0 18 18"><rect x="1" y="1" width="15" height="14" fill="#e8e4d8" stroke="#000"/><path d="M1 15 L16 15" stroke="#000" stroke-width="2"/><rect x="3" y="3" width="4" height="4" fill="#d0c8a0" stroke="#606060" stroke-width="0.5"/><rect x="9" y="3" width="5" height="4" fill="#d0c8a0" stroke="#606060" stroke-width="0.5"/><rect x="3" y="9" width="4" height="4" fill="#d0c8a0" stroke="#606060" stroke-width="0.5"/><path d="M11 7.5 L14.5 10.5 L12.7 10.5 L12.7 14 L9.3 14 L9.3 10.5 L7.5 10.5 Z" fill="#f0f000" stroke="#000" stroke-width="0.7"/></svg>
<svg style="left:298px;top:36px" width="18" height="18" viewBox="0 0 18 18"><rect x="0.5" y="0.5" width="8" height="8" fill="#008000"/><rect x="8.5" y="0.5" width="8" height="8" fill="#0000ff"/><rect x="0.5" y="8.5" width="8" height="7.5" fill="#ff0000"/><rect x="8.5" y="8.5" width="8" height="7.5" fill="#00ff00"/></svg>
<svg style="left:323px;top:35px" width="18" height="18" viewBox="0 0 18 18"><rect x="1" y="1" width="8" height="6" fill="#f8f8f8" stroke="#404040"/><rect x="1" y="1" width="8" height="1.5" fill="#707070"/><rect x="4.5" y="6" width="8" height="6" fill="#f0f0f0" stroke="#30a8a8" stroke-width="1.2"/><rect x="8" y="10" width="8" height="6" fill="#f8f8f8" stroke="#404040"/><rect x="8" y="10" width="8" height="1.5" fill="#707070"/><path d="M13 5 L15.5 2.5" stroke="#2030c0" stroke-width="1.4"/><path d="M14 1.5 L16 1.5 L16 3.5" stroke="#2030c0" stroke-width="1.1" fill="none"/></svg>
<div style="left:346px;top:34px;width:1px;height:21px;background:#a0a0a0"></div>
<div style="left:347px;top:34px;width:1px;height:21px;background:#fff"></div>
<svg style="left:353px;top:36px" width="18" height="18" viewBox="0 0 18 18"><rect x="1" y="4" width="12" height="11" rx="1" fill="#f4f4f4" stroke="#404040" stroke-width="1.2"/><rect x="2" y="5" width="5" height="2" fill="#3030c0"/><path d="M3 9 L11 9 M3 12 L11 12" stroke="#404040" stroke-width="1.2"/><path d="M7 15 L7 17" stroke="#fff"/><path d="M12 1 L15 3 M14 1 L15 1 L15 2" stroke="#e02020" stroke-width="1.2"/></svg>
<div style="left:373px;top:32px;width:1px;height:24px;background:#a8a49c"></div>
<div style="left:374px;top:32px;width:1px;height:24px;background:#fff"></div>
<div style="left:376px;top:33px;width:1px;height:22px;background:#fff"></div>
<div style="left:378px;top:33px;width:1px;height:22px;background:#808080"></div>
<svg style="left:385px;top:36px" width="18" height="18" viewBox="0 0 18 18"><rect x="1" y="3" width="15" height="10" fill="#f4f4f0" stroke="#000"/><rect x="1" y="3" width="1.5" height="10" fill="#2020c0"/><circle cx="6" cy="7" r="1.8" fill="#f0d8a0" stroke="#806020" stroke-width="0.5"/><path d="M3 12 Q6 8 9 12 Z" fill="#e02020"/><path d="M10 7 L14 7 M10 9.5 L14 9.5" stroke="#b0b0b0"/></svg>
<svg style="left:410px;top:36px" width="18" height="18" viewBox="0 0 18 18"><rect x="1" y="3" width="15" height="10" fill="#f4f4f0" stroke="#000"/><rect x="1" y="3" width="1.5" height="10" fill="#2020c0"/><circle cx="6" cy="7" r="1.8" fill="#f0d8a0" stroke="#806020" stroke-width="0.5"/><path d="M3 12 Q6 8 9 12 Z" fill="#e02020"/><path d="M10 7 L14 7 M10 9.5 L14 9.5" stroke="#b0b0b0"/><path d="M15 1 L11 15" stroke="#000" stroke-width="3"/><path d="M15 1 L11 15" stroke="#f0e000" stroke-width="1.8"/><path d="M14.6 0.5 L16 1 L15.6 2.5 L14.2 2 Z" fill="#e02020"/></svg>
<svg style="left:434px;top:36px" width="18" height="18" viewBox="0 0 18 18"><rect x="0" y="0" width="16" height="16" fill="#000"/><path d="M0 9 Q3 5 6 9 Q9 14 16 11" stroke="#e02020" stroke-width="1.3" fill="none"/><path d="M1 15 Q5 1 8 3 Q10 5 13 15" stroke="#20e0e0" stroke-width="1.3" fill="none"/><path d="M2 15 Q8 13 10 7 Q12 3 16 8" stroke="#f0f000" stroke-width="1.3" fill="none"/></svg>
<svg style="left:459px;top:36px" width="18" height="18" viewBox="0 0 18 18"><path d="M0 15 L3 15 L4 2 L5 15 L16 15" stroke="#3030ff" stroke-width="1.4" fill="none"/><path d="M8.5 8 L8.5 6 Q11 3 13.5 6 L13.5 8" stroke="#000" stroke-width="1.2" fill="none"/><rect x="7.5" y="8" width="7" height="6" fill="#e8d800" stroke="#000"/><path d="M8 11 L14 11" stroke="#000"/></svg>
<svg style="left:484px;top:36px" width="18" height="18" viewBox="0 0 18 18"><rect x="0" y="0" width="16" height="16" fill="#000"/><path d="M0 8 L3 8 L4 2 L5 8 L9 8 L10 7 L11 8 L16 8" stroke="#20e0e0" stroke-width="1.2" fill="none"/><path d="M0 10.5 L16 10.5" stroke="#c0c0c0"/><path d="M1 13 L15 13" stroke="#909090" stroke-dasharray="2 1"/></svg>
<div style="left:505px;top:32px;width:1px;height:24px;background:#a8a49c"></div>
<div style="left:506px;top:32px;width:1px;height:24px;background:#fff"></div>
<div style="left:508px;top:33px;width:1px;height:22px;background:#fff"></div>
<div style="left:510px;top:33px;width:1px;height:22px;background:#808080"></div>
<svg style="left:517px;top:34px" width="18" height="20" viewBox="0 0 18 20"><path d="M1 16 L9.5 7" stroke="#000" stroke-width="3.6" stroke-linecap="round"/><path d="M1 16 L9.5 7" stroke="#a00000" stroke-width="2" stroke-linecap="round"/><path d="M3 5.5 Q5 1.5 8 1.5 Q11 2 14 5.5 L14.5 8.5 L12 9 L11.5 7 L9 5 L6 4.5 Z" fill="#c8c8c8" stroke="#000" stroke-width="0.9"/><path d="M3 5.5 L5 3.5" stroke="#000" stroke-width="2"/><path d="M11.5 7 L14.5 7.5" stroke="#000" stroke-width="1.3"/><text x="12" y="18.3" font-family="Liberation Sans" font-size="7.5" fill="#404040">1</text></svg>
<svg style="left:542px;top:34px" width="18" height="20" viewBox="0 0 18 20"><path d="M1 16 L9.5 7" stroke="#000" stroke-width="3.6" stroke-linecap="round"/><path d="M1 16 L9.5 7" stroke="#a00000" stroke-width="2" stroke-linecap="round"/><path d="M3 5.5 Q5 1.5 8 1.5 Q11 2 14 5.5 L14.5 8.5 L12 9 L11.5 7 L9 5 L6 4.5 Z" fill="#c8c8c8" stroke="#000" stroke-width="0.9"/><path d="M3 5.5 L5 3.5" stroke="#000" stroke-width="2"/><path d="M11.5 7 L14.5 7.5" stroke="#000" stroke-width="1.3"/><text x="12" y="18.3" font-family="Liberation Sans" font-size="7.5" fill="#404040">2</text></svg>
<svg style="left:567px;top:34px" width="18" height="20" viewBox="0 0 18 20"><path d="M1 16 L9.5 7" stroke="#000" stroke-width="3.6" stroke-linecap="round"/><path d="M1 16 L9.5 7" stroke="#a00000" stroke-width="2" stroke-linecap="round"/><path d="M3 5.5 Q5 1.5 8 1.5 Q11 2 14 5.5 L14.5 8.5 L12 9 L11.5 7 L9 5 L6 4.5 Z" fill="#c8c8c8" stroke="#000" stroke-width="0.9"/><path d="M3 5.5 L5 3.5" stroke="#000" stroke-width="2"/><path d="M11.5 7 L14.5 7.5" stroke="#000" stroke-width="1.3"/><text x="12" y="18.3" font-family="Liberation Sans" font-size="7.5" fill="#404040">3</text></svg>
<svg style="left:592px;top:34px" width="18" height="20" viewBox="0 0 18 20"><path d="M1 16 L9.5 7" stroke="#000" stroke-width="3.6" stroke-linecap="round"/><path d="M1 16 L9.5 7" stroke="#a00000" stroke-width="2" stroke-linecap="round"/><path d="M3 5.5 Q5 1.5 8 1.5 Q11 2 14 5.5 L14.5 8.5 L12 9 L11.5 7 L9 5 L6 4.5 Z" fill="#c8c8c8" stroke="#000" stroke-width="0.9"/><path d="M3 5.5 L5 3.5" stroke="#000" stroke-width="2"/><path d="M11.5 7 L14.5 7.5" stroke="#000" stroke-width="1.3"/><text x="12" y="18.3" font-family="Liberation Sans" font-size="7.5" fill="#404040">4</text></svg>
<svg style="left:617px;top:34px" width="18" height="20" viewBox="0 0 18 20"><path d="M1 16 L9.5 7" stroke="#000" stroke-width="3.6" stroke-linecap="round"/><path d="M1 16 L9.5 7" stroke="#a00000" stroke-width="2" stroke-linecap="round"/><path d="M3 5.5 Q5 1.5 8 1.5 Q11 2 14 5.5 L14.5 8.5 L12 9 L11.5 7 L9 5 L6 4.5 Z" fill="#c8c8c8" stroke="#000" stroke-width="0.9"/><path d="M3 5.5 L5 3.5" stroke="#000" stroke-width="2"/><path d="M11.5 7 L14.5 7.5" stroke="#000" stroke-width="1.3"/><text x="12" y="18.3" font-family="Liberation Sans" font-size="7.5" fill="#404040">5</text></svg>
<div style="left:636px;top:32px;width:1px;height:24px;background:#a8a49c"></div>
<div style="left:637px;top:32px;width:1px;height:24px;background:#fff"></div>
<div style="left:639px;top:33px;width:1px;height:22px;background:#fff"></div>
<div style="left:641px;top:33px;width:1px;height:22px;background:#808080"></div>
<svg style="left:649px;top:38px" width="18" height="18" viewBox="0 0 18 18"><path d="M5 1 L12 1 L16.5 7.5 L12 14 L5 14 L0.8 7.5 Z" fill="#f00000" stroke="#000" stroke-width="1.3"/><path d="M11 2.5 L6.5 12.5" stroke="#000" stroke-width="1.4"/></svg>
<div style="left:670px;top:32px;width:1px;height:24px;background:#a8a49c"></div>
<div style="left:671px;top:32px;width:1px;height:24px;background:#fff"></div>
<div style="left:673px;top:33px;width:1px;height:22px;background:#fff"></div>
<div style="left:675px;top:33px;width:1px;height:22px;background:#808080"></div>
<svg style="left:683px;top:36px" width="14" height="16" viewBox="0 0 14 16"><path d="M2.5 5 Q2.5 1 7 1 Q11.5 1 11.5 5 Q11.5 7.5 8.5 8.5 L8.5 10.5 L5.5 10.5 L5.5 7 Q8.5 6.5 8.5 4.8 Q8.5 3.5 7 3.5 Q5.5 3.5 5.5 5.5 Z" fill="#f8f000" stroke="#000" stroke-width="1"/><rect x="5.5" y="11.5" width="3" height="3" fill="#f8f000" stroke="#000" stroke-width="1"/></svg>
<div style="left:701px;top:32px;width:1px;height:24px;background:#808080"></div>
<div style="left:702px;top:32px;width:1px;height:24px;background:#fff"></div>
<svg style="left:9px;top:62px" width="18" height="20" viewBox="0 0 18 20"><circle cx="9" cy="9" r="8" fill="none" stroke="#202020" stroke-width="1.2"/><text x="9" y="7" font-family="Liberation Sans" font-weight="bold" font-size="7" text-anchor="middle" fill="#2020ff">N</text><text x="9" y="16" font-family="Liberation Sans" font-weight="bold" font-size="7" text-anchor="middle" fill="#2020ff">S</text><text x="3.5" y="12" font-family="Liberation Sans" font-weight="bold" font-size="6" text-anchor="middle" fill="#2020ff">W</text><text x="14.5" y="12" font-family="Liberation Sans" font-weight="bold" font-size="6" text-anchor="middle" fill="#2020ff">E</text><path d="M6.5 9 L9 7.5 L11.5 9 L9 10.5 Z" fill="#ff0000"/></svg>
<div style="left:30px;top:58px;width:1px;height:25px;background:#a8a49c"></div>
<div style="left:31px;top:58px;width:1px;height:25px;background:#fff"></div>
<div style="left:33px;top:59px;width:1px;height:23px;background:#fff"></div>
<div style="left:35px;top:59px;width:1px;height:23px;background:#808080"></div>
<svg style="left:41px;top:62px" width="18" height="18" viewBox="0 0 18 18"><rect x="0" y="0" width="17" height="16" fill="#000"/><path d="M0 14 L3 14 L4 2 L5 14 L9 14 L10 10 L11 14 L13 14 L14 13 L15 14 L17 14" stroke="#20e8e8" stroke-width="1.2" fill="none"/></svg>
<svg style="left:65px;top:62px" width="18" height="18" viewBox="0 0 18 18"><rect x="0" y="0" width="17" height="16" fill="#000"/><path d="M0 14 L3 14 L4 2 L5 14 L9 14 L10 10 L11 14 L13 14 L14 13 L15 14 L17 14" stroke="#20e8e8" stroke-width="1.2" fill="none"/><path d="M12 3 L14 5.5 L10 5.5 Z M12 11 L14 8.5 L10 8.5 Z" fill="#f0f000"/><rect x="11.5" y="5" width="1" height="4" fill="#f0f000"/></svg>
<svg style="left:91px;top:62px" width="18" height="18" viewBox="0 0 18 18"><rect x="0" y="0" width="17" height="16" fill="#000"/><path d="M0 14 L3 14 L4 2 L5 14 L9 14 L10 10 L11 14 L13 14 L14 13 L15 14 L17 14" stroke="#20e8e8" stroke-width="1.2" fill="none"/><text x="5" y="8" font-family="Liberation Sans" font-size="8" fill="#f0f000">n/e</text></svg>
<svg style="left:116px;top:62px" width="18" height="18" viewBox="0 0 18 18"><rect x="0" y="0" width="17" height="16" fill="#000"/><path d="M0 14 L3 14 L4 2 L5 14 L9 14 L10 10 L11 14 L13 14 L14 13 L15 14 L17 14" stroke="#20e8e8" stroke-width="1.2" fill="none"/><path d="M10 4 L15 8" stroke="#f0f000" stroke-width="1.6"/><path d="M14 6 L15.5 8.5 L12.5 8.5 Z" fill="#f0f000"/></svg>
<svg style="left:141px;top:62px" width="18" height="18" viewBox="0 0 18 18"><rect x="0" y="0" width="17" height="16" fill="#000"/><path d="M0.5 14 Q3 0 8.5 1.5 Q14 0 16.5 14" stroke="#e81010" stroke-width="1.4" fill="none"/><path d="M0.5 15 Q8.5 9 16.5 15" stroke="#20c8c8" stroke-width="1.4" fill="none"/><path d="M7.5 3 L9.5 3 L9.5 7 L11.5 7 L8.5 11 L5.5 7 L7.5 7 Z" fill="#e0e0e0"/></svg>
<div style="left:163px;top:59px;width:21px;height:22px;background:#dcd9d2;box-shadow:inset 1px 1px #909090, inset -1px -1px #fff"></div>
<svg style="left:165px;top:62px" width="18" height="18" viewBox="0 0 18 18"><rect x="0" y="0" width="17" height="16" fill="#000"/><path d="M0.5 14 Q3 0 8.5 1.5 Q14 0 16.5 14" stroke="#e81010" stroke-width="1.4" fill="none"/><path d="M0.5 15 Q8.5 9 16.5 15" stroke="#20c8c8" stroke-width="1.4" fill="none"/><path d="M5 7 L7.5 10 L13 4" stroke="#fff" stroke-width="1.6" fill="none"/></svg>
<div style="left:186px;top:58px;width:1px;height:25px;background:#a8a49c"></div>
<div style="left:187px;top:58px;width:1px;height:25px;background:#fff"></div>
<div style="left:189px;top:59px;width:1px;height:23px;background:#fff"></div>
<div style="left:191px;top:59px;width:1px;height:23px;background:#808080"></div>
<svg style="left:198px;top:62px" width="18" height="18" viewBox="0 0 18 18"><path d="M3 6 L11 0.5" stroke="#000" stroke-width="1.2"/><path d="M4 2.5 L5 5 L8 5.2 L5.6 7 L6.6 9.5 L4 8 L1.4 9.5 L2.4 7 L0 5.2 L3 5 Z" fill="#f0f000" stroke="#505000" stroke-width="0.5"/><path d="M9 7 L10 9.5 L8 9.5 Z" fill="#000"/><path d="M0 15 L3 15 L4.5 8 L6 15 L8 15 L9.5 9 L11 15 L15 15" stroke="#3c3cff" stroke-width="1.3" fill="none"/></svg>
<svg style="left:223px;top:62px" width="18" height="18" viewBox="0 0 18 18"><path d="M0 15 L3 15 L4.5 8 L6 15 L8 15 L9.5 9 L11 15 L15 15" stroke="#3c3cff" stroke-width="1.3" fill="none"/><path d="M9.5 3 L9.5 8 M8 6.5 L9.5 8 L11 6.5" stroke="#000" stroke-width="1.2" fill="none"/></svg>
<svg style="left:245px;top:62px" width="20" height="20" viewBox="0 0 20 20"><path d="M1 16 Q4 16 4 9 Q4 2 7 2" stroke="#505050" stroke-width="1.2" fill="none"/><path d="M5 1 L7 3" stroke="#3030ff"/><path d="M7 3 L10 6" stroke="#000"/><text x="13" y="8" font-family="Liberation Sans" font-size="6.5" text-anchor="middle" fill="#000">≎1</text><text x="13" y="15" font-family="Liberation Sans" font-size="6.5" text-anchor="middle" fill="#000">≎2</text><path d="M9 8.5 L17 8.5" stroke="#3030ff"/><path d="M9 15.5 L17 15.5" stroke="#3030ff"/><path d="M1 17 L3 17" stroke="#3030ff"/></svg>
<div style="left:268px;top:58px;width:1px;height:25px;background:#a8a49c"></div>
<div style="left:269px;top:58px;width:1px;height:25px;background:#fff"></div>
<div style="left:271px;top:59px;width:1px;height:23px;background:#fff"></div>
<div style="left:273px;top:59px;width:1px;height:23px;background:#808080"></div>
<svg style="left:279px;top:62px" width="18" height="18" viewBox="0 0 18 18"><path d="M1 1 L1 9 L6 9 L6 15 L16 15" stroke="#404040" stroke-width="1.2" fill="none"/><path d="M2 8 L2 4 M4 8 L4 3 M8 14 L8 10 M10 14 L10 11 M13 14 L13 11" stroke="#404040"/><path d="M12 5 L16 5" stroke="#2040ff" stroke-width="1.4"/></svg>
<svg style="left:304px;top:62px" width="18" height="18" viewBox="0 0 18 18"><path d="M1 5 L8 1 L15 5 Z" fill="#fff" stroke="#000" stroke-width="1.1"/><path d="M1 5.5 L15 5.5" stroke="#c02020" stroke-width="1.2"/><path d="M3 6 L3 13 M6 6 L6 13 M10 6 L10 13 M13 6 L13 13" stroke="#505050" stroke-width="1.8"/><path d="M4.5 7 L4.5 12 M8 7 L8 12 M11.5 7 L11.5 12" stroke="#d0a020" stroke-width="1.3"/><path d="M1 14 L15 14" stroke="#000" stroke-width="1.6"/></svg>
<svg style="left:329px;top:62px" width="18" height="18" viewBox="0 0 18 18"><path d="M1 5 L8 1 L15 5 Z" fill="#fff" stroke="#000" stroke-width="1.1"/><path d="M1 5.5 L15 5.5" stroke="#c02020" stroke-width="1.2"/><path d="M3 6 L3 13 M6 6 L6 13 M10 6 L10 13 M13 6 L13 13" stroke="#505050" stroke-width="1.8"/><path d="M4.5 7 L4.5 12 M8 7 L8 12 M11.5 7 L11.5 12" stroke="#d0a020" stroke-width="1.3"/><path d="M1 14 L15 14" stroke="#000" stroke-width="1.6"/><path d="M7 4 L13 4 L16 7 L16 15 L7 15 Z" fill="#f0f0f0" stroke="#000"/><path d="M8.5 7 L12 7 M8.5 9 L14 9 M8.5 11 L14 11" stroke="#3040ff"/></svg>
<div style="left:350px;top:58px;width:1px;height:25px;background:#a8a49c"></div>
<div style="left:351px;top:58px;width:1px;height:25px;background:#fff"></div>
<div style="left:353px;top:59px;width:1px;height:23px;background:#fff"></div>
<div style="left:355px;top:59px;width:1px;height:23px;background:#808080"></div>
<svg style="left:361px;top:62px" width="18" height="18" viewBox="0 0 18 18"><rect x="2" y="1" width="13" height="13" fill="#fff"/><path d="M1 1 L1 15 L16 15" stroke="#000" fill="none"/><path d="M0 3 L1 3 M0 6 L1 6 M0 9 L1 9 M0 12 L1 12 M4 16 L4 15 M7 16 L7 15 M10 16 L10 15 M13 16 L13 15" stroke="#000"/></svg>
<svg style="left:385px;top:62px" width="18" height="18" viewBox="0 0 18 18"><rect x="2" y="1" width="13" height="13" fill="#fff"/><path d="M1 1 L1 15 L16 15" stroke="#000" fill="none"/><path d="M0 3 L1 3 M0 6 L1 6 M0 9 L1 9 M0 12 L1 12 M4 16 L4 15 M7 16 L7 15 M10 16 L10 15 M13 16 L13 15" stroke="#000"/><path d="M8 9 L14 3" stroke="#000" stroke-width="1.3"/><path d="M4 9 L8 7 L10 10 L8 12 L5 12 Z" fill="#d8c800" stroke="#000" stroke-width="0.8"/></svg>
<div style="left:407px;top:58px;width:1px;height:25px;background:#a8a49c"></div>
<div style="left:408px;top:58px;width:1px;height:25px;background:#fff"></div>
<div style="left:410px;top:59px;width:1px;height:23px;background:#fff"></div>
<div style="left:412px;top:59px;width:1px;height:23px;background:#808080"></div>
<svg style="left:418px;top:62px" width="18" height="18" viewBox="0 0 18 18"><path d="M1 1 L1 15 L16 15" stroke="#000" fill="none"/><path d="M0 3 L1 3 M0 6 L1 6 M0 9 L1 9 M0 12 L1 12 M4 16 L4 15 M7 16 L7 15 M10 16 L10 15 M13 16 L13 15" stroke="#000"/><path d="M2 14 L10 7" stroke="#000"/><circle cx="10" cy="7" r="1" fill="#fff" stroke="#000"/><path d="M14 1 L9 14" stroke="#000" stroke-width="3"/><path d="M14 1 L9 14" stroke="#f0e000" stroke-width="1.8"/><path d="M14 1 L9 14" stroke="#e02020" stroke-width="0.6"/></svg>
<svg style="left:442px;top:62px" width="18" height="18" viewBox="0 0 18 18"><rect x="2" y="1" width="13" height="13" fill="#fff"/><path d="M1 1 L1 15 L16 15" stroke="#000" fill="none"/><path d="M0 3 L1 3 M0 6 L1 6 M0 9 L1 9 M0 12 L1 12 M4 16 L4 15 M7 16 L7 15 M10 16 L10 15 M13 16 L13 15" stroke="#000"/><path d="M2 14 L9 8" stroke="#000"/><path d="M11 3 L15.5 8 L13 8 L13 14 L9 14 L9 8 L6.5 8 Z" fill="#f0f000" stroke="#000" stroke-width="0.8"/></svg>
<svg style="left:467px;top:62px" width="18" height="18" viewBox="0 0 18 18"><rect x="1" y="1" width="9" height="12" rx="1" fill="#c0c0c0" stroke="#303030"/><rect x="2.5" y="2.5" width="6" height="2" fill="#f0e020"/><path d="M2.5 6.5 L8.5 6.5 M2.5 8.5 L8.5 8.5 M2.5 10.5 L8.5 10.5 M4.5 5 L4.5 12 M6.5 5 L6.5 12" stroke="#808080" stroke-width="0.8"/><path d="M6 9 L12 9 L15 12 L15 16 L6 16 Z" fill="#fff" stroke="#000"/><path d="M8 13 L13 13" stroke="#3040ff"/></svg>
<svg style="left:493px;top:62px" width="16" height="18" viewBox="0 0 16 18"><path d="M4 4 L11 4 L14 7 L14 16 L4 16 Z" fill="#f4f4f4" stroke="#303030"/><path d="M6 8 L10 8 M6 11 L12 11 M6 14 L12 14" stroke="#3040ff" stroke-width="0.9"/><path d="M1 5 L1 1 L7 1" stroke="#2040ff" stroke-width="1.4" fill="none"/><path d="M6 -0.5 L8.5 1 L6 2.5 Z" fill="#2040ff"/></svg>
<svg style="left:517px;top:62px" width="18" height="18" viewBox="0 0 18 18"><path d="M7 5 L13 5 L16 8 L16 16 L7 16 Z" fill="#f4f4f4" stroke="#303030"/><path d="M9 9 L13 9 M9 12 L14 12 M9 14.5 L14 14.5" stroke="#3040ff" stroke-width="0.9"/><path d="M2.5 1.5 L7.5 1.5 L8.5 5.5 L1.5 5.5 Z" fill="#fff" stroke="#000" stroke-width="0.9"/><path d="M0.5 6.5 L9.5 5.5 L9.5 10.5 L0.5 11.5 Z" fill="#f0f000" stroke="#000" stroke-width="0.9"/><path d="M0.5 8.5 L9.5 7.5" stroke="#000" stroke-width="0.6"/></svg>
<div style="left:537px;top:58px;width:1px;height:25px;background:#a8a49c"></div>
<div style="left:538px;top:58px;width:1px;height:25px;background:#fff"></div>
<div style="left:540px;top:59px;width:1px;height:23px;background:#fff"></div>
<div style="left:542px;top:59px;width:1px;height:23px;background:#808080"></div>
<svg style="left:550px;top:62px" width="18" height="18" viewBox="0 0 18 18"><path d="M2.5 0.5 L10.5 0.5 L14.5 4.5 L14.5 15.5 L2.5 15.5 Z" fill="#fafafa" stroke="#202020" stroke-width="1"/><path d="M4 3.5 L6 3.5 M7 3.5 L9 3.5 M4 6 L7 6 M8 6 L12 6 M4 8.5 L6 8.5 M7 8.5 L12 8.5" stroke="#2030ff" stroke-width="1"/><path d="M4 13 L5 10 L6 13 L8 13 L9 10.5 L10 13 L12 13" stroke="#303030" fill="none" stroke-width="0.8"/></svg>
<svg style="left:573px;top:62px" width="18" height="18" viewBox="0 0 18 18"><g transform="translate(3,0)"><path d="M2.5 0.5 L10.5 0.5 L14.5 4.5 L14.5 15.5 L2.5 15.5 Z" fill="#fafafa" stroke="#202020" stroke-width="1"/><path d="M4 3.5 L6 3.5 M7 3.5 L9 3.5 M4 6 L7 6 M8 6 L12 6 M4 8.5 L6 8.5 M7 8.5 L12 8.5" stroke="#2030ff" stroke-width="1"/><path d="M4 13 L5 10 L6 13 L8 13 L9 10.5 L10 13 L12 13" stroke="#303030" fill="none" stroke-width="0.8"/></g><path d="M2.5 5.5 L7.5 5.5 L8.5 9.5 L1.5 9.5 Z" fill="#fff" stroke="#000" stroke-width="0.9"/><path d="M0.5 10.5 L9.5 9.5 L9.5 14.5 L0.5 15.5 Z" fill="#f0f000" stroke="#000" stroke-width="0.9"/><path d="M0.5 12.5 L9.5 11.5" stroke="#000" stroke-width="0.6"/></svg>
<div style="left:595px;top:58px;width:1px;height:25px;background:#a8a49c"></div>
<div style="left:596px;top:58px;width:1px;height:25px;background:#fff"></div>
<div style="left:598px;top:59px;width:1px;height:23px;background:#fff"></div>
<div style="left:600px;top:59px;width:1px;height:23px;background:#808080"></div>
<svg style="left:605px;top:62px" width="18" height="18" viewBox="0 0 18 18"><rect x="1" y="2" width="6" height="6" fill="#d8d8d8" stroke="#303030"/><path d="M1.5 4.5 L4 7 L8.5 1" stroke="#f02020" stroke-width="1.4" fill="none"/><rect x="1" y="10" width="6" height="6" fill="#d8d8d8" stroke="#303030"/><text x="12.5" y="8" font-family="Liberation Sans" font-weight="bold" font-size="7.5" text-anchor="middle" fill="#2020ff">A</text><text x="12.5" y="16" font-family="Liberation Sans" font-weight="bold" font-size="7.5" text-anchor="middle" fill="#2020ff">B</text></svg>
<svg style="left:629px;top:60px" width="20" height="21" viewBox="0 0 20 21"><path d="M2 12 Q0 14 3 16 Q8 20 14 19.5 Q18 18 16 13 Q13 8 7 8 Q3 8 2 12 Z" fill="#f0f0f0" stroke="#202020" stroke-width="1.1"/><path d="M3 10 Q7 12 11 10" stroke="#303030" fill="none"/><path d="M2 12 Q0 8 3 7" stroke="#202020" fill="none"/><path d="M3 3 L14 3" stroke="#2020e0" stroke-width="1.3"/><path d="M1 3 L4 1 L4 5 Z" fill="#2020e0"/><path d="M5 5.5 L16 5.5" stroke="#f02020" stroke-width="1.2"/><path d="M18 5.5 L15 3.5 L15 7.5 Z" fill="#f02020"/></svg>
<svg style="left:658px;top:61px" width="10" height="19" viewBox="0 0 10 19"><rect x="0" y="0" width="10" height="19" fill="#f01010"/><rect x="1.5" y="6" width="7" height="2.5" fill="#e8e8e8"/><rect x="1.5" y="15" width="7" height="2.5" fill="#e8e8e8"/><path d="M3.5 1.5 L6.5 4.5 M6.5 1.5 L3.5 4.5 M5 6 L5 8.5 M3.5 10 L6.5 10 L3.5 13 L6.5 13 M5 15 L5 17.5" stroke="#000" stroke-width="0.9"/></svg>
<svg style="left:680px;top:62px" width="17" height="16" viewBox="0 0 17 16"><path d="M0.8 14 L0.8 4.5 L16 4.5" stroke="#303030" stroke-width="1.6" fill="none"/><path d="M2.5 6.5 L6.5 12 M6.5 6.5 L2.5 12 M2 6.5 L4 6.5 M5 6.5 L7 6.5 M2 12 L4 12 M5 12 L7 12" stroke="#303030" stroke-width="0.9"/></svg>
<div style="left:702px;top:58px;width:1px;height:25px;background:#808080"></div>
<div style="left:703px;top:58px;width:1px;height:25px;background:#fff"></div>
</body></html>
